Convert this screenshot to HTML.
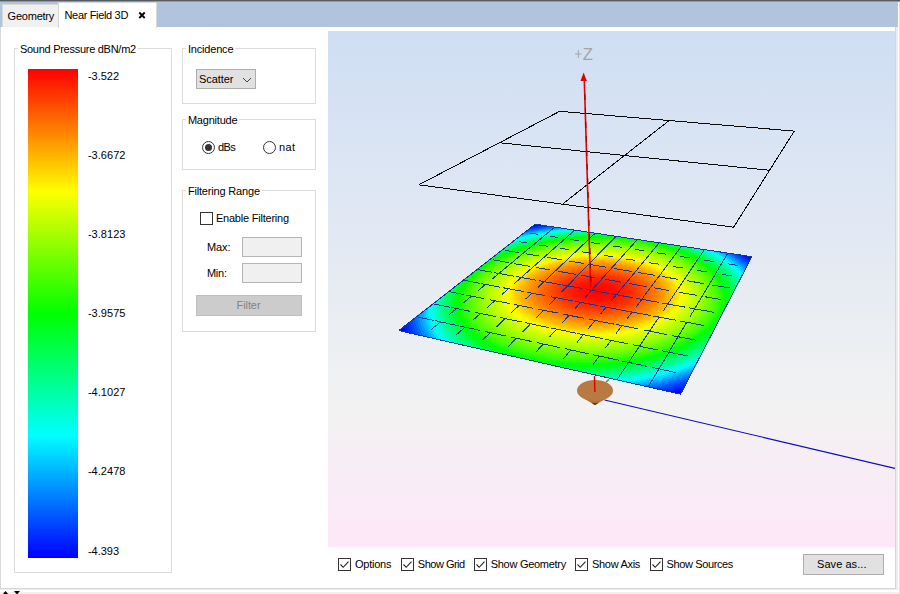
<!DOCTYPE html>
<html><head><meta charset="utf-8"><title>Near Field 3D</title>
<style>
html,body{margin:0;padding:0;}
body{width:900px;height:594px;position:relative;overflow:hidden;background:#fff;font-family:"Liberation Sans",sans-serif;}
.a{position:absolute;box-sizing:border-box;}
.t{position:absolute;white-space:nowrap;font-family:"Liberation Sans",sans-serif;}
.gb{position:absolute;box-sizing:border-box;border:1px solid #dcdcdc;}
.cb{position:absolute;box-sizing:border-box;width:13px;height:13px;border:1px solid #333;background:#fff;}
.cb svg{position:absolute;left:-1px;top:-1px;}
</style></head><body>
<!-- window frame -->
<div class="a" style="left:0;top:0;width:900px;height:594px;background:#f0f0f0"></div>
<div class="a" style="left:0;top:0;width:899px;height:592px;background:#fff"></div>
<div class="a" style="left:899px;top:0;width:1px;height:594px;background:#e2e2e2"></div>
<div class="a" style="left:0;top:27px;width:898px;height:563px;background:#ececec"></div>
<div class="a" style="left:0;top:27px;width:896px;height:562px;background:#fff;border-left:1px solid #d9d9d9;border-right:1px solid #d6d6d6;border-bottom:1px solid #d6d6d6"></div>
<!-- tab strip -->
<div class="a" style="left:0;top:0;width:898px;height:27px;background:#b0c4de"></div>
<div class="a" style="left:0;top:0;width:900px;height:1px;background:#5a5a5a"></div>
<div class="a" style="left:0;top:1px;width:900px;height:1px;background:#8d99aa"></div>
<div class="a" style="left:2px;top:4px;width:57px;height:23px;background:#f0f0f0;border:1px solid #d9d9d9;border-bottom:none"></div>
<div class="a" style="left:58px;top:2px;width:99px;height:26px;background:#fff;border:1px solid #d9d9d9;border-top-color:#c9d6e8;border-bottom:none"></div>
<svg class="a" style="left:137px;top:10px" width="10" height="10" viewBox="0 0 10 10"><path d="M2.3 2.5 L7.7 8 M7.7 2.5 L2.3 8" stroke="#000" stroke-width="1.8" fill="none"/></svg>
<!-- group boxes -->
<div class="gb" style="left:14px;top:48px;width:158px;height:525px"></div>
<div class="gb" style="left:182px;top:48px;width:134px;height:56px"></div>
<div class="gb" style="left:182px;top:119px;width:134px;height:51px"></div>
<div class="gb" style="left:182px;top:190px;width:134px;height:142px"></div>
<!-- colorbar -->
<div class="a" style="left:28px;top:69px;width:50px;height:489px;background:linear-gradient(to bottom,#ff0000 0%,#ffff00 25%,#00ff00 50%,#00ffff 75%,#0000ff 100%)"></div>
<!-- combo -->
<div class="a" style="left:196px;top:69px;width:60px;height:20px;background:#e1e1e1;border:1px solid #adadad"></div>
<svg class="a" style="left:241px;top:76px" width="12" height="8" viewBox="0 0 12 8"><path d="M2 2 L6 6 L10 2" stroke="#444" stroke-width="1" fill="none"/></svg>
<!-- radios -->
<div class="a" style="left:202px;top:141px;width:13px;height:13px;border:1px solid #333;border-radius:50%;background:#fff"></div>
<div class="a" style="left:205px;top:144px;width:7px;height:7px;border-radius:50%;background:#333"></div>
<div class="a" style="left:263px;top:141px;width:13px;height:13px;border:1px solid #333;border-radius:50%;background:#fff"></div>
<!-- filtering -->
<div class="cb" style="left:200px;top:212px"></div>
<div class="a" style="left:242px;top:237px;width:60px;height:20px;background:#f0f0f0;border:1px solid #b5b5b5"></div>
<div class="a" style="left:242px;top:263px;width:60px;height:20px;background:#f0f0f0;border:1px solid #b5b5b5"></div>
<div class="a" style="left:196px;top:295px;width:106px;height:21px;background:#cccccc;border:1px solid #bfbfbf"></div>
<!-- save button -->
<div class="a" style="left:803px;top:554px;width:81px;height:21px;background:#e1e1e1;border:1px solid #adadad"></div>
<!-- 3D viewport -->
<div class="a" style="left:328px;top:31px;width:567px;height:516px;overflow:hidden;background:linear-gradient(to bottom,#cfdef4 0%,#f2f2f2 73%,#fde7f8 100%)">
<svg class="a" style="left:0;top:0" width="567" height="516" viewBox="0 0 567 516">
<defs><clipPath id="q"><polygon points="207.2,193.2 423.8,225.7 352.6,363.2 70.8,299.6"/></clipPath></defs>
<path d="M231.7 80.3L466.3 100.1M466.3 100.1L405.6 196.2M405.6 196.2L90.8 153.8M90.8 153.8L231.7 80.3M340.3 90.2L235 172.7M172.8 111.9L440.7 139.2" stroke="#0a0a0a" stroke-width="1" fill="none" shape-rendering="crispEdges"/>
<g clip-path="url(#q)" shape-rendering="crispEdges">
<polygon points="207.2,193.2 423.8,225.7 352.6,363.2 70.8,299.6" fill="rgb(0,0,255)"/>
<polygon points="457.6,294.3 453.6,303.2 447.8,312.2 440.1,321 430.4,329.7 418.8,338 405.4,345.9 390.1,353.2 373.2,359.9 354.7,365.7 334.9,370.5 314.1,374.3 292.5,377.1 270.5,378.6 248.3,379 226.4,378.1 205,376.1 184.4,372.9 165,368.6 146.9,363.4 130.4,357.3 115.6,350.5 102.7,343 91.7,335 82.6,326.7 75.5,318 70.3,309.2 66.9,300.4 65.3,291.6 65.4,282.9 67,274.5 70.1,266.2 74.4,258.3 80.1,250.7 86.8,243.4 94.5,236.6 103,230.2 112.4,224.2 122.5,218.6 133.2,213.5 144.4,208.8 156.1,204.6 168.2,200.8 180.7,197.5 193.4,194.6 206.4,192.2 219.5,190.2 232.8,188.7 246.1,187.6 259.5,187 272.9,186.8 286.3,187 299.6,187.7 312.8,188.8 325.8,190.4 338.6,192.4 351.1,194.9 363.3,197.8 375.2,201.2 386.6,205.1 397.5,209.4 407.8,214.2 417.5,219.4 426.5,225.1 434.6,231.3 441.8,237.9 448,244.9 453.1,252.4 456.9,260.2 459.4,268.3 460.4,276.8 459.8,285.4" fill="rgb(0,0,255)"/>
<polygon points="455.2,293.9 451.2,302.7 445.4,311.5 437.8,320.2 428.2,328.8 416.7,337 403.4,344.7 388.3,351.9 371.6,358.4 353.4,364.1 333.9,368.9 313.4,372.7 292.1,375.3 270.4,376.9 248.6,377.2 226.9,376.4 205.8,374.4 185.6,371.2 166.4,367.1 148.5,361.9 132.2,356 117.6,349.2 104.8,341.9 93.9,334 85,325.8 77.9,317.3 72.7,308.6 69.3,299.9 67.7,291.2 67.7,282.7 69.3,274.3 72.2,266.1 76.5,258.3 82,250.8 88.6,243.6 96.2,236.8 104.7,230.5 113.9,224.5 123.9,219 134.5,213.9 145.6,209.3 157.1,205.1 169.1,201.4 181.4,198.1 194,195.2 206.9,192.8 219.9,190.9 233,189.3 246.3,188.3 259.6,187.6 272.9,187.4 286.1,187.6 299.3,188.3 312.3,189.4 325.2,191 337.9,193 350.3,195.5 362.4,198.4 374.1,201.7 385.4,205.6 396.2,209.9 406.4,214.6 416,219.8 424.8,225.5 432.8,231.6 439.9,238.1 446,245.1 451,252.4 454.7,260.2 457.1,268.2 458.1,276.6 457.5,285.1" fill="rgb(0,2,255)"/>
<polygon points="452.9,293.4 448.9,302.1 443.1,310.8 435.5,319.4 426,327.8 414.6,335.9 401.5,343.5 386.6,350.6 370.1,357 352.1,362.6 332.9,367.3 312.7,371 291.7,373.6 270.3,375.1 248.8,375.5 227.5,374.6 206.7,372.7 186.7,369.6 167.8,365.5 150.2,360.5 134.1,354.6 119.7,348 107,340.7 96.2,333 87.3,324.9 80.3,316.5 75.1,308 71.7,299.4 70.1,290.8 70,282.4 71.5,274.1 74.4,266.1 78.6,258.3 84,250.9 90.5,243.8 98,237.1 106.3,230.8 115.4,224.9 125.3,219.4 135.7,214.4 146.7,209.8 158.2,205.6 170,201.9 182.2,198.7 194.7,195.8 207.4,193.4 220.3,191.5 233.3,190 246.4,188.9 259.6,188.3 272.8,188.1 285.9,188.3 299,189 311.9,190.1 324.7,191.6 337.2,193.6 349.5,196.1 361.5,199 373.1,202.3 384.2,206.1 394.9,210.4 405,215.1 414.4,220.2 423.2,225.8 431.1,231.9 438.1,238.4 444,245.2 448.9,252.5 452.6,260.2 454.9,268.1 455.8,276.4 455.1,284.8" fill="rgb(0,6,255)"/>
<polygon points="450.5,293 446.5,301.6 440.8,310.2 433.2,318.6 423.8,326.9 412.6,334.8 399.6,342.4 384.8,349.3 368.5,355.6 350.8,361.1 331.9,365.7 311.9,369.3 291.3,371.9 270.2,373.4 249,373.7 228,372.9 207.5,371 187.8,368 169.2,364 151.8,359 135.9,353.2 121.7,346.7 109.2,339.6 98.5,332 89.7,324 82.7,315.8 77.5,307.4 74.1,298.9 72.4,290.5 72.3,282.1 73.8,273.9 76.6,266 80.7,258.3 86,251 92.4,243.9 99.7,237.3 107.9,231.1 117,225.2 126.7,219.8 137,214.8 147.9,210.3 159.2,206.2 170.9,202.5 183,199.2 195.3,196.4 207.9,194.1 220.7,192.1 233.6,190.6 246.6,189.5 259.6,188.9 272.7,188.7 285.7,188.9 298.6,189.6 311.4,190.7 324.1,192.2 336.5,194.2 348.7,196.7 360.5,199.5 372,202.8 383,206.6 393.6,210.8 403.6,215.5 412.9,220.6 421.5,226.2 429.3,232.2 436.2,238.6 442,245.4 446.8,252.6 450.4,260.1 452.6,268 453.5,276.2 452.8,284.5" fill="rgb(0,9,255)"/>
<polygon points="448.1,292.6 444.2,301 438.4,309.5 430.9,317.8 421.6,326 410.5,333.8 397.6,341.2 383.1,348 367,354.2 349.5,359.6 330.9,364.1 311.2,367.7 290.9,370.2 270.1,371.7 249.2,372 228.6,371.2 208.4,369.3 189,366.4 170.6,362.4 153.4,357.6 137.8,351.9 123.7,345.5 111.3,338.5 100.8,331 92,323.2 85.1,315 79.9,306.8 76.5,298.4 74.8,290.1 74.7,281.8 76,273.8 78.8,265.9 82.8,258.3 88,251 94.2,244.1 101.5,237.5 109.6,231.4 118.5,225.6 128.1,220.2 138.3,215.3 149,210.8 160.2,206.7 171.8,203 183.8,199.8 196,197 208.5,194.7 221.1,192.7 233.9,191.3 246.8,190.2 259.7,189.6 272.6,189.4 285.5,189.6 298.3,190.3 311,191.3 323.5,192.9 335.8,194.8 347.9,197.3 359.6,200.1 370.9,203.4 381.9,207.1 392.3,211.3 402.1,216 411.3,221 419.8,226.5 427.5,232.5 434.3,238.8 440.1,245.6 444.7,252.7 448.2,260.1 450.4,267.9 451.2,275.9 450.5,284.2" fill="rgb(0,22,255)"/>
<polygon points="445.8,292.2 441.8,300.5 436.1,308.8 428.7,317 419.4,325.1 408.4,332.7 395.7,340 381.4,346.7 365.5,352.8 348.3,358.1 329.8,362.6 310.5,366.1 290.5,368.6 270,370 249.5,370.3 229.1,369.5 209.2,367.7 190.1,364.8 171.9,360.9 155.1,356.1 139.6,350.5 125.7,344.3 113.5,337.4 103,330 94.3,322.3 87.4,314.3 82.3,306.1 78.9,297.9 77.2,289.7 77,281.6 78.3,273.6 80.9,265.8 84.9,258.3 90,251.1 96.1,244.3 103.2,237.8 111.2,231.7 120,225.9 129.5,220.6 139.5,215.7 150.2,211.2 161.2,207.2 172.7,203.6 184.5,200.4 196.6,197.6 209,195.3 221.5,193.4 234.2,191.9 246.9,190.8 259.7,190.2 272.5,190 285.3,190.2 298,190.9 310.5,192 322.9,193.5 335.1,195.5 347,197.9 358.7,200.7 369.9,204 380.7,207.7 391,211.8 400.7,216.4 409.8,221.4 418.2,226.9 425.7,232.8 432.4,239 438.1,245.7 442.7,252.8 446.1,260.1 448.2,267.8 448.9,275.7 448.1,283.9" fill="rgb(0,39,255)"/>
<polygon points="443.4,291.7 439.5,300 433.8,308.2 426.4,316.3 417.3,324.1 406.4,331.7 393.8,338.9 379.7,345.5 364,351.4 347,356.6 328.9,361 309.8,364.5 290,366.9 269.9,368.3 249.7,368.6 229.6,367.8 210,366 191.2,363.2 173.3,359.4 156.7,354.7 141.4,349.2 127.7,343 115.6,336.3 105.2,329 96.6,321.4 89.8,313.6 84.7,305.5 81.3,297.4 79.5,289.3 79.3,281.3 80.5,273.4 83.1,265.8 86.9,258.3 91.9,251.2 98,244.4 105,238 112.9,232 121.5,226.3 130.9,221 140.8,216.2 151.3,211.7 162.3,207.7 173.6,204.1 185.3,201 197.3,198.2 209.5,195.9 221.9,194 234.4,192.5 247.1,191.5 259.8,190.9 272.4,190.7 285.1,190.9 297.7,191.6 310.1,192.6 322.4,194.2 334.4,196.1 346.2,198.5 357.7,201.3 368.8,204.5 379.5,208.2 389.7,212.3 399.3,216.8 408.2,221.8 416.5,227.2 423.9,233 430.5,239.3 436.1,245.9 440.6,252.8 443.9,260.1 445.9,267.7 446.6,275.5 445.8,283.6" fill="rgb(0,55,255)"/>
<polygon points="441.1,291.3 437.1,299.4 431.5,307.5 424.2,315.5 415.1,323.2 404.3,330.7 391.9,337.7 377.9,344.2 362.5,350.1 345.7,355.2 327.9,359.5 309.1,362.8 289.6,365.2 269.8,366.6 249.9,366.9 230.1,366.2 210.8,364.4 192.3,361.6 174.7,357.9 158.3,353.3 143.2,347.9 129.6,341.8 117.7,335.2 107.5,328.1 98.9,320.6 92.2,312.8 87.1,304.9 83.7,296.9 81.9,288.9 81.6,281 82.8,273.2 85.3,265.7 89,258.4 93.9,251.3 99.9,244.6 106.8,238.3 114.5,232.3 123.1,226.6 132.3,221.4 142.1,216.6 152.5,212.2 163.3,208.2 174.5,204.7 186.1,201.5 198,198.8 210,196.5 222.3,194.7 234.7,193.2 247.2,192.2 259.8,191.5 272.4,191.3 284.9,191.6 297.3,192.2 309.6,193.3 321.8,194.8 333.7,196.7 345.4,199.1 356.8,201.9 367.7,205.1 378.3,208.7 388.3,212.8 397.8,217.3 406.7,222.2 414.8,227.6 422.2,233.3 428.6,239.5 434.1,246 438.5,252.9 441.7,260.1 443.7,267.6 444.3,275.3 443.5,283.3" fill="rgb(0,71,255)"/>
<polygon points="438.8,290.9 434.8,298.9 429.2,306.8 421.9,314.7 412.9,322.3 402.3,329.6 390.1,336.5 376.3,342.9 361,348.7 344.5,353.7 326.9,357.9 308.4,361.2 289.2,363.6 269.7,364.9 250.1,365.2 230.7,364.5 211.7,362.8 193.4,360 176,356.4 159.8,351.9 145,346.6 131.6,340.6 119.8,334.1 109.7,327.1 101.2,319.7 94.5,312.1 89.5,304.3 86.1,296.4 84.2,288.5 83.9,280.7 85,273.1 87.4,265.6 91.1,258.4 95.9,251.4 101.8,244.8 108.5,238.5 116.2,232.6 124.6,227 133.7,221.8 143.4,217.1 153.6,212.7 164.3,208.8 175.4,205.2 186.9,202.1 198.6,199.4 210.6,197.2 222.7,195.3 235,193.8 247.4,192.8 259.8,192.2 272.3,192 284.7,192.2 297,192.9 309.2,193.9 321.2,195.4 333,197.3 344.6,199.7 355.8,202.4 366.7,205.6 377.1,209.2 387,213.3 396.4,217.7 405.1,222.6 413.1,227.9 420.4,233.6 426.7,239.7 432.1,246.2 436.4,253 439.6,260.1 441.5,267.5 442,275.1 441.1,282.9" fill="rgb(0,88,255)"/>
<polygon points="436.4,290.5 432.5,298.3 426.9,306.2 419.7,313.9 410.8,321.4 400.3,328.6 388.2,335.4 374.6,341.7 359.5,347.3 343.3,352.3 325.9,356.4 307.7,359.7 288.8,362 269.6,363.3 250.3,363.6 231.2,362.9 212.5,361.2 194.5,358.5 177.4,354.9 161.4,350.5 146.8,345.3 133.6,339.4 121.9,333 111.9,326.1 103.5,318.9 96.9,311.4 91.8,303.7 88.4,295.9 86.6,288.1 86.2,280.5 87.3,272.9 89.6,265.5 93.2,258.4 97.9,251.5 103.6,245 110.3,238.7 117.9,232.9 126.1,227.4 135.1,222.2 144.7,217.5 154.8,213.2 165.4,209.3 176.4,205.8 187.7,202.7 199.3,200 211.1,197.8 223.1,195.9 235.3,194.5 247.6,193.5 259.9,192.9 272.2,192.7 284.5,192.9 296.7,193.5 308.7,194.6 320.6,196.1 332.3,198 343.7,200.3 354.9,203 365.6,206.2 375.9,209.8 385.7,213.8 394.9,218.2 403.6,223 411.5,228.3 418.6,233.9 424.8,239.9 430.1,246.3 434.3,253.1 437.4,260.1 439.2,267.4 439.7,274.9 438.8,282.6" fill="rgb(0,109,255)"/>
<polygon points="434.1,290 430.2,297.8 424.6,305.5 417.5,313.1 408.7,320.5 398.3,327.6 386.3,334.3 372.9,340.4 358.1,346 342,350.8 324.9,354.9 307,358.1 288.4,360.3 269.5,361.6 250.5,361.9 231.7,361.2 213.3,359.6 195.5,356.9 178.7,353.4 163,349.1 148.5,344 135.5,338.2 124,331.9 114.1,325.1 105.8,318 99.2,310.6 94.2,303.1 90.8,295.4 88.9,287.8 88.5,280.2 89.5,272.7 91.8,265.4 95.3,258.4 99.9,251.6 105.5,245.1 112.1,239 119.5,233.2 127.7,227.7 136.5,222.7 146,218 156,213.7 166.4,209.8 177.3,206.4 188.5,203.3 199.9,200.7 211.7,198.4 223.6,196.6 235.6,195.2 247.7,194.1 259.9,193.5 272.1,193.4 284.2,193.6 296.3,194.2 308.3,195.3 320,196.7 331.6,198.6 342.9,200.9 353.9,203.6 364.5,206.8 374.7,210.3 384.4,214.3 393.5,218.7 402,223.4 409.8,228.6 416.8,234.2 422.9,240.2 428.1,246.5 432.2,253.1 435.2,260.1 437,267.3 437.5,274.7 436.5,282.3" fill="rgb(0,132,255)"/>
<polygon points="431.8,289.6 427.8,297.3 422.3,304.9 415.2,312.3 406.6,319.6 396.3,326.6 384.5,333.1 371.2,339.2 356.6,344.6 340.8,349.4 324,353.4 306.3,356.5 288,358.7 269.4,360 250.7,360.3 232.2,359.6 214.1,358 196.6,355.4 180,351.9 164.5,347.7 150.3,342.7 137.4,337 126.1,330.8 116.3,324.2 108.1,317.2 101.5,309.9 96.5,302.5 93.1,294.9 91.2,287.4 90.8,279.9 91.7,272.5 94,265.4 97.4,258.4 101.9,251.7 107.4,245.3 113.9,239.2 121.2,233.5 129.2,228.1 138,223.1 147.3,218.4 157.2,214.2 167.5,210.4 178.2,206.9 189.3,203.9 200.6,201.3 212.2,199 224,197.2 235.9,195.8 247.9,194.8 259.9,194.2 272,194 284,194.3 296,194.9 307.8,195.9 319.5,197.4 330.9,199.2 342.1,201.5 352.9,204.2 363.4,207.3 373.5,210.8 383,214.8 392,219.1 400.4,223.9 408.1,229 415,234.5 421,240.4 426.1,246.6 430.1,253.2 433.1,260.1 434.8,267.2 435.2,274.5 434.2,282" fill="rgb(0,155,255)"/>
<polygon points="429.5,289.2 425.5,296.7 420.1,304.2 413,311.6 404.4,318.7 394.3,325.6 382.6,332 369.6,338 355.2,343.3 339.6,348 323,351.9 305.6,355 287.7,357.1 269.3,358.4 250.9,358.7 232.7,358 214.9,356.4 197.7,353.9 181.4,350.5 166.1,346.3 152,341.4 139.4,335.8 128.1,329.7 118.5,323.2 110.4,316.3 103.8,309.2 98.9,301.8 95.5,294.4 93.6,287 93.1,279.6 94,272.4 96.1,265.3 99.5,258.4 103.9,251.8 109.3,245.5 115.7,239.4 122.8,233.8 130.8,228.4 139.4,223.5 148.6,218.9 158.3,214.7 168.5,210.9 179.1,207.5 190.1,204.5 201.3,201.9 212.7,199.7 224.4,197.9 236.2,196.5 248.1,195.5 260,194.9 271.9,194.7 283.8,194.9 295.6,195.6 307.3,196.6 318.9,198 330.2,199.9 341.2,202.1 352,204.8 362.3,207.9 372.3,211.4 381.7,215.3 390.6,219.6 398.8,224.3 406.4,229.3 413.2,234.8 419.1,240.6 424.1,246.8 428.1,253.3 430.9,260.1 432.5,267.1 432.9,274.3 431.9,281.7" fill="rgb(0,177,255)"/>
<polygon points="427.2,288.8 423.2,296.2 417.8,303.6 410.8,310.8 402.3,317.8 392.3,324.6 380.8,330.9 367.9,336.7 353.7,342 338.4,346.6 322.1,350.4 304.9,353.4 287.3,355.6 269.3,356.8 251.2,357.1 233.2,356.4 215.7,354.8 198.7,352.3 182.7,349 167.6,344.9 153.8,340.1 141.3,334.7 130.2,328.7 120.6,322.3 112.6,315.5 106.1,308.4 101.2,301.2 97.8,293.9 95.9,286.6 95.4,279.4 96.2,272.2 98.3,265.2 101.5,258.4 105.9,251.9 111.2,245.6 117.4,239.7 124.5,234.1 132.3,228.8 140.8,223.9 149.9,219.4 159.5,215.2 169.6,211.4 180.1,208.1 190.9,205.1 202,202.5 213.3,200.3 224.8,198.5 236.5,197.2 248.2,196.2 260,195.6 271.8,195.4 283.6,195.6 295.3,196.2 306.9,197.3 318.3,198.7 329.5,200.5 340.4,202.8 351,205.4 361.2,208.5 371,211.9 380.4,215.8 389.1,220 397.3,224.7 404.7,229.7 411.4,235.1 417.2,240.9 422.1,246.9 426,253.4 428.7,260 430.3,267 430.6,274.1 429.6,281.4" fill="rgb(0,200,255)"/>
<polygon points="424.8,288.4 420.9,295.7 415.6,302.9 408.7,310 400.2,316.9 390.3,323.6 379,329.8 366.3,335.5 352.3,340.7 337.2,345.2 321.1,348.9 304.3,351.9 286.9,354 269.2,355.2 251.4,355.5 233.7,354.8 216.4,353.3 199.8,350.8 184,347.6 169.2,343.5 155.5,338.8 143.2,333.5 132.3,327.6 122.8,321.3 114.9,314.6 108.4,307.7 103.6,300.6 100.2,293.5 98.2,286.2 97.7,279.1 98.4,272 100.5,265.1 103.6,258.4 107.9,252 113.1,245.8 119.2,239.9 126.2,234.4 133.9,229.2 142.3,224.3 151.2,219.8 160.7,215.7 170.6,212 181,208.6 191.7,205.7 202.6,203.1 213.8,201 225.2,199.2 236.8,197.8 248.4,196.8 260.1,196.3 271.7,196.1 283.4,196.3 295,196.9 306.4,197.9 317.7,199.4 328.7,201.2 339.5,203.4 350,206 360.1,209 369.8,212.4 379,216.3 387.7,220.5 395.7,225.1 403,230.1 409.6,235.4 415.3,241.1 420.1,247.1 423.9,253.4 426.6,260 428.1,266.9 428.4,273.9 427.3,281.1" fill="rgb(0,223,255)"/>
<polygon points="422.5,288 418.7,295.1 413.3,302.3 406.5,309.3 398.2,316.1 388.4,322.6 377.2,328.7 364.6,334.3 350.9,339.4 336,343.8 320.2,347.5 303.6,350.4 286.5,352.4 269.1,353.6 251.6,353.9 234.2,353.2 217.2,351.7 200.8,349.3 185.3,346.1 170.7,342.2 157.2,337.6 145.1,332.3 134.3,326.5 124.9,320.4 117.1,313.8 110.7,307 105.9,300 102.5,293 100.6,285.9 100,278.8 100.7,271.9 102.6,265 105.7,258.4 109.9,252.1 115,246 121,240.2 127.9,234.7 135.5,229.5 143.7,224.7 152.5,220.3 161.9,216.2 171.7,212.5 181.9,209.2 192.5,206.3 203.3,203.8 214.4,201.6 225.7,199.9 237.1,198.5 248.6,197.5 260.1,197 271.7,196.8 283.2,197 294.6,197.6 305.9,198.6 317.1,200 328,201.8 338.7,204 349,206.6 359,209.6 368.6,213 377.7,216.8 386.2,220.9 394.1,225.5 401.3,230.4 407.8,235.7 413.4,241.3 418.1,247.3 421.8,253.5 424.4,260 425.9,266.8 426.1,273.7 425,280.8" fill="rgb(0,246,255)"/>
<polygon points="420.2,287.5 416.4,294.6 411.1,301.6 404.3,308.5 396.1,315.2 386.4,321.6 375.4,327.6 363,333.1 349.4,338.1 334.8,342.4 319.2,346 302.9,348.8 286.1,350.9 269,352 251.8,352.3 234.7,351.7 218,350.2 201.9,347.8 186.5,344.7 172.2,340.8 158.9,336.3 147,331.2 136.3,325.5 127.1,319.4 119.3,313 113,306.3 108.2,299.4 104.8,292.5 102.9,285.5 102.3,278.5 102.9,271.7 104.8,265 107.8,258.4 111.9,252.2 116.9,246.1 122.8,240.4 129.5,235 137,229.9 145.1,225.1 153.8,220.7 163.1,216.7 172.8,213.1 182.9,209.8 193.3,206.9 204,204.4 214.9,202.3 226.1,200.5 237.4,199.2 248.7,198.2 260.1,197.6 271.6,197.5 283,197.7 294.3,198.3 305.5,199.3 316.5,200.7 327.3,202.5 337.8,204.6 348.1,207.2 357.9,210.2 367.4,213.5 376.3,217.3 384.7,221.4 392.5,225.9 399.6,230.8 406,236 411.5,241.5 416.1,247.4 419.7,253.6 422.2,260 423.6,266.7 423.8,273.5 422.7,280.5" fill="rgb(0,255,241)"/>
<polygon points="418,287.1 414.1,294.1 408.8,301 402.1,307.8 394,314.3 384.5,320.6 373.6,326.5 361.4,331.9 348,336.8 333.6,341 318.3,344.6 302.3,347.3 285.7,349.3 268.9,350.4 252,350.7 235.2,350.1 218.8,348.7 202.9,346.4 187.8,343.3 173.7,339.5 160.7,335 148.8,330 138.3,324.4 129.2,318.5 121.5,312.2 115.3,305.6 110.5,298.8 107.2,292 105.2,285.1 104.5,278.3 105.1,271.5 107,264.9 109.9,258.5 113.9,252.3 118.8,246.3 124.6,240.6 131.2,235.3 138.6,230.2 146.6,225.5 155.2,221.2 164.3,217.2 173.8,213.6 183.8,210.4 194.1,207.5 204.7,205 215.5,202.9 226.5,201.2 237.7,199.9 248.9,198.9 260.2,198.3 271.5,198.2 282.7,198.4 293.9,199 305,200 315.9,201.3 326.6,203.1 337,205.3 347.1,207.8 356.8,210.8 366.1,214.1 375,217.8 383.2,221.9 390.9,226.3 397.9,231.1 404.1,236.3 409.6,241.8 414.1,247.6 417.6,253.7 420.1,260 421.4,266.6 421.6,273.3 420.4,280.2" fill="rgb(0,255,218)"/>
<polygon points="415.7,286.7 411.8,293.6 406.6,300.3 400,307 392,313.4 382.5,319.6 371.8,325.4 359.8,330.7 346.6,335.5 332.4,339.6 317.4,343.1 301.6,345.8 285.4,347.8 268.8,348.9 252.2,349.2 235.7,348.6 219.5,347.1 203.9,344.9 189.1,341.9 175.2,338.2 162.3,333.8 150.7,328.8 140.3,323.4 131.3,317.5 123.8,311.3 117.6,304.9 112.8,298.2 109.5,291.5 107.5,284.7 106.8,278 107.4,271.3 109.1,264.8 112,258.5 115.9,252.3 120.7,246.5 126.4,240.9 132.9,235.6 140.2,230.6 148,226 156.5,221.7 165.5,217.7 174.9,214.1 184.7,210.9 194.9,208.1 205.4,205.6 216.1,203.6 226.9,201.9 238,200.5 249.1,199.6 260.2,199 271.4,198.9 282.5,199.1 293.6,199.7 304.5,200.6 315.3,202 325.8,203.8 336.1,205.9 346.1,208.4 355.7,211.3 364.9,214.6 373.6,218.3 381.8,222.3 389.3,226.7 396.2,231.5 402.3,236.6 407.6,242 412.1,247.7 415.5,253.7 417.9,260 419.2,266.5 419.3,273.1 418.1,279.9" fill="rgb(0,255,195)"/>
<polygon points="413.4,286.3 409.6,293 404.4,299.7 397.8,306.2 389.9,312.6 380.6,318.6 370,324.3 358.2,329.5 345.2,334.2 331.3,338.3 316.5,341.7 301,344.4 285,346.3 268.7,347.3 252.4,347.6 236.1,347 220.3,345.6 204.9,343.4 190.4,340.5 176.7,336.8 164,332.6 152.6,327.7 142.3,322.4 133.5,316.6 126,310.5 119.9,304.2 115.1,297.6 111.8,291 109.8,284.4 109.1,277.7 109.6,271.2 111.3,264.7 114.1,258.5 117.9,252.4 122.6,246.6 128.2,241.1 134.6,235.9 141.7,231 149.5,226.4 157.8,222.1 166.7,218.2 176,214.7 185.7,211.5 195.7,208.7 206.1,206.3 216.6,204.2 227.4,202.5 238.3,201.2 249.2,200.3 260.3,199.7 271.3,199.6 282.3,199.8 293.2,200.4 304,201.3 314.7,202.7 325.1,204.4 335.3,206.5 345.1,209 354.6,211.9 363.6,215.2 372.2,218.8 380.3,222.8 387.7,227.1 394.5,231.8 400.5,236.9 405.7,242.2 410.1,247.9 413.4,253.8 415.8,260 417,266.4 417.1,272.9 415.9,279.6" fill="rgb(0,255,173)"/>
<polygon points="411.1,285.9 407.3,292.5 402.2,299.1 395.7,305.5 387.9,311.7 378.7,317.6 368.3,323.2 356.6,328.3 343.9,332.9 330.1,336.9 315.6,340.3 300.3,342.9 284.6,344.7 268.6,345.8 252.6,346.1 236.6,345.5 221,344.1 206,342 191.6,339.1 178.1,335.5 165.7,331.3 154.4,326.6 144.3,321.3 135.6,315.7 128.2,309.7 122.1,303.5 117.4,297 114.1,290.5 112.1,284 111.4,277.4 111.8,271 113.5,264.7 116.2,258.5 119.9,252.5 124.5,246.8 130,241.4 136.3,236.2 143.3,231.3 150.9,226.8 159.2,222.6 167.9,218.7 177.1,215.2 186.7,212.1 196.6,209.3 206.8,206.9 217.2,204.9 227.8,203.2 238.6,201.9 249.4,201 260.3,200.4 271.2,200.3 282.1,200.5 292.9,201.1 303.6,202 314.1,203.4 324.4,205.1 334.4,207.2 344.1,209.7 353.5,212.5 362.4,215.7 370.9,219.3 378.8,223.3 386.1,227.6 392.8,232.2 398.7,237.2 403.8,242.5 408,248 411.3,253.9 413.6,260 414.8,266.3 414.8,272.7 413.6,279.3" fill="rgb(0,255,150)"/>
<polygon points="408.8,285.5 405.1,292 400,298.4 393.6,304.7 385.8,310.9 376.8,316.7 366.5,322.1 355,327.2 342.5,331.7 329,335.6 314.7,338.9 299.7,341.4 284.3,343.2 268.5,344.3 252.8,344.5 237.1,344 221.8,342.6 207,340.5 192.9,337.7 179.6,334.2 167.4,330.1 156.2,325.4 146.3,320.3 137.7,314.7 130.3,308.9 124.4,302.8 119.7,296.5 116.4,290.1 114.4,283.6 113.6,277.2 114.1,270.8 115.6,264.6 118.2,258.5 121.9,252.6 126.4,247 131.8,241.6 138,236.5 144.9,231.7 152.4,227.2 160.5,223.1 169.1,219.3 178.2,215.8 187.6,212.7 197.4,209.9 207.5,207.6 217.7,205.5 228.2,203.9 238.9,202.6 249.6,201.7 260.3,201.1 271.1,201 281.9,201.2 292.5,201.8 303.1,202.7 313.4,204 323.6,205.7 333.5,207.8 343.1,210.3 352.3,213.1 361.1,216.3 369.5,219.8 377.3,223.7 384.5,228 391,232.6 396.9,237.5 401.9,242.7 406,248.2 409.2,254 411.4,260 412.6,266.2 412.5,272.5 411.3,279" fill="rgb(0,255,128)"/>
<polygon points="406.6,285.1 402.8,291.5 397.8,297.8 391.5,304 383.8,310 374.9,315.7 364.7,321.1 353.5,326 341.1,330.4 327.8,334.2 313.8,337.4 299.1,340 283.9,341.7 268.5,342.8 252.9,343 237.6,342.5 222.5,341.2 208,339.1 194.1,336.3 181.1,332.9 169,328.9 158.1,324.3 148.3,319.3 139.8,313.8 132.5,308.1 126.6,302.1 122,295.9 118.7,289.6 116.7,283.2 115.9,276.9 116.3,270.6 117.8,264.5 120.3,258.5 123.9,252.7 128.3,247.2 133.6,241.8 139.7,236.8 146.5,232.1 153.9,227.6 161.8,223.5 170.3,219.8 179.3,216.3 188.6,213.3 198.2,210.6 208.2,208.2 218.3,206.2 228.7,204.6 239.2,203.3 249.7,202.4 260.4,201.9 271,201.7 281.6,201.9 292.2,202.5 302.6,203.4 312.8,204.7 322.9,206.4 332.6,208.5 342.1,210.9 351.2,213.7 359.9,216.8 368.1,220.3 375.8,224.2 382.9,228.4 389.3,232.9 395,237.8 400,242.9 404,248.3 407.2,254 409.3,259.9 410.4,266 410.3,272.3 409.1,278.7" fill="rgb(0,255,108)"/>
<polygon points="404.3,284.7 400.6,291 395.6,297.2 389.3,303.3 381.8,309.1 373,314.7 363,320 351.9,324.8 339.8,329.2 326.7,332.9 312.9,336.1 298.4,338.5 283.5,340.3 268.4,341.3 253.1,341.5 238,341 223.2,339.7 209,337.7 195.3,335 182.5,331.6 170.7,327.7 159.9,323.2 150.2,318.2 141.8,312.9 134.7,307.3 128.8,301.4 124.3,295.3 121,289.1 119,282.9 118.2,276.6 118.5,270.5 119.9,264.4 122.4,258.5 125.9,252.8 130.3,247.3 135.4,242.1 141.4,237.1 148.1,232.4 155.3,228.1 163.2,224 171.6,220.3 180.3,216.9 189.5,213.9 199.1,211.2 208.9,208.8 218.9,206.9 229.1,205.2 239.5,204 249.9,203.1 260.4,202.6 270.9,202.4 281.4,202.6 291.8,203.2 302.1,204.1 312.2,205.4 322.1,207.1 331.8,209.1 341.1,211.5 350.1,214.3 358.6,217.4 366.7,220.8 374.3,224.7 381.3,228.8 387.6,233.3 393.2,238.1 398,243.1 402,248.5 405.1,254.1 407.1,259.9 408.1,265.9 408.1,272.1 406.8,278.4" fill="rgb(0,255,89)"/>
<polygon points="402.1,284.2 398.4,290.4 393.4,296.5 387.2,302.5 379.8,308.3 371.1,313.8 361.3,318.9 350.3,323.7 338.4,327.9 325.6,331.6 312,334.7 297.8,337.1 283.2,338.8 268.3,339.8 253.3,340 238.5,339.5 224,338.2 209.9,336.3 196.6,333.6 184,330.3 172.3,326.5 161.7,322.1 152.2,317.2 143.9,312 136.9,306.4 131.1,300.7 126.6,294.7 123.3,288.6 121.3,282.5 120.4,276.4 120.7,270.3 122.1,264.3 124.5,258.5 127.9,252.9 132.2,247.5 137.3,242.3 143.1,237.4 149.7,232.8 156.8,228.5 164.5,224.5 172.8,220.8 181.4,217.5 190.5,214.5 199.9,211.8 209.6,209.5 219.5,207.5 229.5,205.9 239.8,204.7 250.1,203.8 260.5,203.3 270.8,203.1 281.2,203.3 291.5,203.9 301.6,204.8 311.6,206.1 321.4,207.8 330.9,209.8 340.1,212.1 348.9,214.9 357.4,217.9 365.3,221.4 372.8,225.1 379.6,229.2 385.9,233.6 391.4,238.4 396.1,243.4 400,248.7 403,254.2 405,259.9 405.9,265.8 405.8,271.9 404.5,278.1" fill="rgb(0,255,69)"/>
<polygon points="399.8,283.8 396.2,289.9 391.3,295.9 385.1,301.8 377.8,307.5 369.2,312.8 359.6,317.9 348.8,322.5 337.1,326.7 324.4,330.3 311.1,333.3 297.2,335.7 282.8,337.3 268.2,338.3 253.5,338.5 239,338 224.7,336.8 210.9,334.9 197.8,332.3 185.4,329.1 173.9,325.3 163.5,321 154.1,316.2 146,311.1 139,305.6 133.3,300 128.8,294.1 125.6,288.1 123.5,282.1 122.7,276.1 122.9,270.1 124.3,264.3 126.6,258.5 129.9,253 134.1,247.7 139.1,242.6 144.8,237.7 151.3,233.2 158.3,228.9 165.9,225 174,221.3 182.5,218 191.5,215.1 200.7,212.4 210.3,210.1 220,208.2 230,206.6 240.1,205.4 250.3,204.5 260.5,204 270.8,203.8 281,204 291.1,204.6 301.1,205.5 311,206.8 320.6,208.4 330,210.4 339.1,212.8 347.8,215.5 356.1,218.5 363.9,221.9 371.3,225.6 378,229.6 384.1,234 389.5,238.7 394.2,243.6 398,248.8 400.9,254.3 402.8,259.9 403.7,265.7 403.6,271.7 402.3,277.8" fill="rgb(0,255,49)"/>
<polygon points="397.6,283.4 393.9,289.4 389.1,295.3 383,301.1 375.8,306.6 367.4,311.9 357.8,316.8 347.3,321.4 335.7,325.4 323.3,329 310.2,331.9 296.5,334.2 282.4,335.9 268.1,336.8 253.7,337 239.4,336.6 225.4,335.4 211.9,333.5 199,330.9 186.8,327.8 175.6,324.1 165.3,319.9 156.1,315.2 148,310.2 141.2,304.8 135.5,299.3 131.1,293.5 127.8,287.7 125.8,281.7 124.9,275.8 125.2,270 126.4,264.2 128.7,258.6 131.9,253.1 136,247.8 140.9,242.8 146.5,238 152.9,233.5 159.8,229.3 167.3,225.4 175.2,221.8 183.7,218.6 192.4,215.6 201.6,213.1 211,210.8 220.6,208.9 230.4,207.3 240.4,206.1 250.4,205.2 260.5,204.7 270.7,204.6 280.7,204.8 290.7,205.3 300.6,206.2 310.3,207.5 319.8,209.1 329.1,211.1 338,213.4 346.6,216 354.8,219.1 362.6,222.4 369.8,226.1 376.4,230.1 382.4,234.4 387.7,239 392.2,243.8 396,249 398.8,254.3 400.7,259.9 401.5,265.6 401.3,271.5 400,277.4" fill="rgb(0,255,30)"/>
<polygon points="395.3,283 391.7,288.9 386.9,294.7 381,300.3 373.8,305.8 365.5,311 356.1,315.8 345.7,320.2 334.4,324.2 322.2,327.7 309.4,330.6 295.9,332.8 282.1,334.4 268,335.4 253.9,335.6 239.9,335.1 226.2,333.9 212.9,332.1 200.2,329.6 188.2,326.5 177.2,322.9 167.1,318.8 158,314.2 150.1,309.3 143.3,304.1 137.7,298.6 133.3,292.9 130.1,287.2 128.1,281.4 127.2,275.6 127.4,269.8 128.6,264.1 130.8,258.6 133.9,253.2 137.9,248 142.7,243.1 148.3,238.4 154.5,233.9 161.3,229.8 168.6,225.9 176.5,222.4 184.8,219.1 193.4,216.2 202.4,213.7 211.7,211.5 221.2,209.6 230.9,208 240.7,206.8 250.6,206 260.6,205.5 270.6,205.3 280.5,205.5 290.4,206 300.1,206.9 309.7,208.2 319.1,209.8 328.2,211.7 337,214 345.5,216.6 353.6,219.6 361.2,222.9 368.2,226.5 374.8,230.5 380.7,234.7 385.9,239.3 390.3,244.1 393.9,249.1 396.7,254.4 398.5,259.9 399.3,265.5 399.1,271.3 397.8,277.1" fill="rgb(0,255,10)"/>
<polygon points="393.2,282.6 389.6,288.4 384.9,294.1 379,299.6 371.9,304.9 363.8,310 354.5,314.7 344.3,319.1 333.2,323 321.2,326.3 308.6,329.2 295.4,331.4 281.9,332.9 268.1,333.8 254.2,334 240.5,333.6 227,332.4 214,330.6 201.5,328.2 189.8,325.2 178.9,321.6 169,317.6 160.1,313.1 152.3,308.3 145.6,303.2 140.1,297.8 135.7,292.3 132.5,286.7 130.5,281 129.5,275.3 129.7,269.6 130.8,264 133,258.6 136,253.3 139.9,248.2 144.6,243.3 150,238.7 156.1,234.3 162.8,230.2 170,226.4 177.7,222.9 185.9,219.7 194.4,216.9 203.3,214.4 212.4,212.2 221.8,210.3 231.3,208.8 241,207.6 250.8,206.7 260.6,206.2 270.5,206.1 280.3,206.3 290,206.8 299.6,207.7 309.1,208.9 318.3,210.5 327.3,212.4 336,214.7 344.4,217.3 352.3,220.2 359.8,223.5 366.8,227.1 373.2,231 378.9,235.1 384,239.6 388.4,244.4 392,249.3 394.6,254.5 396.4,259.9 397.2,265.5 396.9,271.1 395.6,276.9" fill="rgb(7,255,0)"/>
<polygon points="391.1,282.3 387.5,287.9 382.9,293.4 377.1,298.8 370.1,304.1 362.1,309 353,313.6 343,317.9 332.1,321.7 320.4,325 308,327.7 295.1,329.8 281.8,331.4 268.3,332.2 254.7,332.4 241.2,332 228,330.8 215.2,329.1 203,326.7 191.5,323.8 180.8,320.3 171,316.4 162.3,312 154.6,307.3 148,302.3 142.5,297 138.2,291.6 135,286.1 133,280.5 132,274.9 132.1,269.4 133.2,263.9 135.2,258.5 138.2,253.4 142,248.3 146.6,243.6 151.9,239 157.8,234.7 164.4,230.7 171.5,226.9 179,223.5 187.1,220.4 195.4,217.6 204.2,215.1 213.2,212.9 222.4,211.1 231.8,209.6 241.3,208.4 251,207.6 260.7,207.1 270.4,206.9 280.1,207.1 289.7,207.7 299.1,208.5 308.5,209.8 317.6,211.3 326.4,213.2 335,215.5 343.2,218 351,220.9 358.4,224.1 365.3,227.7 371.6,231.5 377.3,235.6 382.3,240 386.5,244.7 390,249.6 392.6,254.7 394.3,260 395.1,265.4 394.8,271 393.5,276.6" fill="rgb(25,255,0)"/>
<polygon points="389,281.9 385.5,287.4 380.9,292.8 375.2,298.1 368.3,303.2 360.5,308 351.6,312.5 341.7,316.7 331,320.4 319.5,323.6 307.4,326.3 294.7,328.3 281.7,329.8 268.5,330.7 255.2,330.9 242,330.4 229,329.3 216.5,327.6 204.5,325.3 193.2,322.4 182.7,319 173.1,315.1 164.5,310.9 156.9,306.3 150.4,301.4 145,296.3 140.7,291 137.5,285.5 135.4,280.1 134.5,274.6 134.5,269.1 135.5,263.8 137.5,258.5 140.4,253.4 144,248.5 148.5,243.8 153.7,239.3 159.5,235.1 165.9,231.2 172.9,227.5 180.4,224.1 188.2,221 196.5,218.2 205.1,215.8 213.9,213.6 223,211.8 232.3,210.4 241.7,209.2 251.2,208.4 260.7,207.9 270.3,207.8 279.8,208 289.3,208.5 298.7,209.4 307.8,210.6 316.8,212.1 325.6,214 334,216.2 342.1,218.7 349.8,221.6 357,224.8 363.8,228.2 370,232 375.6,236.1 380.5,240.4 384.7,245 388.1,249.8 390.6,254.8 392.3,260 393,265.4 392.7,270.8 391.4,276.3" fill="rgb(43,255,0)"/>
<polygon points="386.9,281.5 383.4,286.9 378.9,292.2 373.3,297.4 366.6,302.4 358.8,307.1 350.1,311.5 340.4,315.5 329.9,319.1 318.6,322.2 306.7,324.8 294.4,326.9 281.6,328.3 268.6,329.1 255.6,329.3 242.7,328.8 230,327.8 217.7,326.1 206,323.8 194.9,321 184.6,317.7 175.1,313.9 166.6,309.8 159.2,305.3 152.7,300.5 147.4,295.5 143.1,290.3 140,285 137.9,279.6 136.9,274.3 136.9,268.9 137.9,263.7 139.8,258.5 142.5,253.5 146.1,248.7 150.5,244.1 155.5,239.7 161.2,235.5 167.5,231.6 174.4,228 181.7,224.7 189.4,221.6 197.5,218.9 205.9,216.5 214.7,214.4 223.6,212.6 232.7,211.2 242,210 251.4,209.2 260.8,208.8 270.2,208.6 279.6,208.8 288.9,209.4 298.2,210.2 307.2,211.4 316.1,212.9 324.7,214.8 333,217 341,219.5 348.5,222.3 355.7,225.4 362.3,228.8 368.4,232.6 373.9,236.6 378.7,240.8 382.8,245.3 386.1,250 388.6,255 390.2,260.1 390.9,265.3 390.6,270.7 389.3,276.1" fill="rgb(60,255,0)"/>
<polygon points="384.8,281.1 381.4,286.4 376.9,291.6 371.4,296.7 364.8,301.5 357.2,306.1 348.6,310.4 339.1,314.3 328.8,317.8 317.8,320.9 306.1,323.4 294,325.4 281.5,326.8 268.8,327.6 256,327.7 243.4,327.3 231,326.2 218.9,324.6 207.4,322.4 196.5,319.6 186.4,316.4 177.1,312.7 168.8,308.7 161.4,304.3 155.1,299.6 149.8,294.7 145.6,289.6 142.5,284.5 140.4,279.2 139.3,274 139.3,268.7 140.2,263.6 142,258.5 144.7,253.6 148.2,248.9 152.4,244.3 157.4,240 162.9,235.9 169.1,232.1 175.8,228.5 183,225.3 190.6,222.3 198.6,219.6 206.8,217.2 215.4,215.1 224.2,213.4 233.2,212 242.3,210.8 251.6,210.1 260.8,209.6 270.1,209.5 279.4,209.7 288.6,210.2 297.7,211.1 306.6,212.2 315.3,213.7 323.8,215.6 332,217.7 339.8,220.2 347.3,223 354.3,226 360.8,229.4 366.8,233.1 372.2,237 376.9,241.2 380.9,245.6 384.2,250.3 386.6,255.1 388.2,260.1 388.8,265.3 388.5,270.5 387.2,275.8" fill="rgb(73,255,0)"/>
<polygon points="382.7,280.8 379.4,285.9 374.9,291 369.5,295.9 363,300.7 355.5,305.2 347.1,309.4 337.8,313.2 327.7,316.6 316.9,319.6 305.5,322 293.6,323.9 281.4,325.3 269,326 256.5,326.2 244.1,325.8 231.9,324.7 220.1,323.1 208.8,321 198.2,318.3 188.2,315.2 179.1,311.6 170.9,307.6 163.7,303.3 157.4,298.7 152.2,293.9 148.1,289 144.9,283.9 142.8,278.8 141.8,273.6 141.7,268.5 142.5,263.5 144.3,258.5 146.9,253.7 150.2,249 154.4,244.6 159.2,240.3 164.7,236.3 170.7,232.6 177.3,229.1 184.3,225.8 191.8,222.9 199.6,220.3 207.8,217.9 216.2,215.9 224.8,214.2 233.7,212.8 242.7,211.7 251.8,210.9 260.9,210.4 270.1,210.3 279.2,210.5 288.2,211 297.2,211.9 306,213.1 314.6,214.5 322.9,216.3 331,218.5 338.7,220.9 346,223.6 352.9,226.7 359.3,230 365.2,233.6 370.5,237.5 375.1,241.6 379.1,246 382.2,250.5 384.6,255.3 386.1,260.2 386.7,265.2 386.4,270.4 385.1,275.6" fill="rgb(87,255,0)"/>
<polygon points="380.7,280.4 377.3,285.4 373,290.4 367.6,295.2 361.3,299.8 353.9,304.2 345.7,308.3 336.5,312 326.6,315.4 316.1,318.2 304.9,320.6 293.3,322.5 281.3,323.8 269.1,324.5 256.9,324.7 244.8,324.3 232.9,323.3 221.3,321.7 210.2,319.6 199.8,317 190,313.9 181.1,310.4 173,306.5 165.9,302.3 159.8,297.9 154.6,293.2 150.5,288.3 147.4,283.4 145.3,278.4 144.2,273.3 144.1,268.3 144.8,263.4 146.5,258.5 149,253.8 152.3,249.2 156.3,244.8 161.1,240.7 166.4,236.7 172.3,233 178.7,229.6 185.6,226.4 193,223.5 200.7,220.9 208.7,218.6 217,216.6 225.5,214.9 234.2,213.6 243,212.5 252,211.7 261,211.3 270,211.2 279,211.4 287.9,211.9 296.7,212.7 305.4,213.9 313.8,215.3 322,217.1 330,219.2 337.6,221.6 344.8,224.3 351.6,227.3 357.9,230.6 363.6,234.1 368.8,237.9 373.3,242 377.2,246.3 380.3,250.7 382.6,255.4 384.1,260.2 384.7,265.2 384.3,270.2 383,275.3" fill="rgb(100,255,0)"/>
<polygon points="378.6,280 375.3,284.9 371,289.8 365.7,294.5 359.5,299 352.3,303.3 344.2,307.3 335.3,310.9 325.6,314.1 315.2,316.9 304.3,319.3 292.9,321.1 281.2,322.3 269.3,323.1 257.3,323.2 245.4,322.8 233.8,321.8 222.5,320.3 211.6,318.2 201.4,315.7 191.8,312.7 183.1,309.2 175.1,305.5 168.1,301.4 162.1,297 157,292.4 152.9,287.7 149.8,282.9 147.7,278 146.6,273 146.4,268.1 147.2,263.3 148.8,258.5 151.2,253.9 154.4,249.4 158.3,245.1 162.9,241 168.1,237.1 173.9,233.5 180.2,230.1 187,227 194.2,224.2 201.7,221.6 209.6,219.4 217.7,217.4 226.1,215.7 234.7,214.4 243.4,213.3 252.2,212.6 261,212.1 269.9,212 278.8,212.2 287.5,212.7 296.2,213.6 304.7,214.7 313.1,216.2 321.1,217.9 328.9,220 336.4,222.3 343.5,225 350.2,227.9 356.4,231.2 362,234.6 367.1,238.4 371.6,242.4 375.3,246.6 378.4,251 380.6,255.6 382,260.3 382.6,265.1 382.2,270.1 380.9,275" fill="rgb(113,255,0)"/>
<polygon points="376.5,279.6 373.3,284.5 369.1,289.2 363.9,293.8 357.7,298.2 350.7,302.4 342.7,306.2 334,309.8 324.5,312.9 314.4,315.6 303.7,317.9 292.5,319.7 281.1,320.9 269.4,321.6 257.7,321.7 246.1,321.3 234.7,320.3 223.6,318.8 213,316.8 203,314.4 193.6,311.4 185,308.1 177.2,304.4 170.3,300.4 164.4,296.2 159.3,291.7 155.3,287.1 152.3,282.3 150.2,277.5 149,272.7 148.8,267.9 149.5,263.2 151,258.5 153.3,254 156.5,249.6 160.3,245.4 164.8,241.3 169.9,237.5 175.5,234 181.7,230.7 188.3,227.6 195.4,224.8 202.8,222.3 210.5,220.1 218.5,218.1 226.8,216.5 235.2,215.2 243.7,214.1 252.4,213.4 261.1,213 269.8,212.9 278.6,213.1 287.2,213.6 295.7,214.4 304.1,215.5 312.3,217 320.3,218.7 327.9,220.7 335.3,223.1 342.2,225.7 348.8,228.6 354.9,231.7 360.4,235.2 365.4,238.8 369.8,242.8 373.5,246.9 376.4,251.2 378.6,255.7 380,260.3 380.5,265.1 380.1,269.9 378.8,274.8" fill="rgb(125,255,0)"/>
<polygon points="374.5,279.3 371.3,284 367.1,288.6 362,293.1 356,297.4 349.1,301.4 341.3,305.2 332.7,308.6 323.4,311.7 313.5,314.4 303,316.6 292.2,318.3 281,319.5 269.6,320.1 258.1,320.3 246.8,319.9 235.6,318.9 224.8,317.5 214.4,315.5 204.6,313.1 195.4,310.2 186.9,307 179.3,303.4 172.5,299.5 166.6,295.3 161.7,291 157.7,286.5 154.7,281.8 152.6,277.1 151.4,272.4 151.2,267.7 151.8,263.1 153.3,258.5 155.5,254 158.5,249.7 162.2,245.6 166.6,241.7 171.6,237.9 177.1,234.4 183.2,231.2 189.7,228.2 196.6,225.4 203.9,223 211.5,220.8 219.3,218.9 227.4,217.3 235.7,216 244.1,215 252.6,214.2 261.2,213.8 269.8,213.7 278.3,213.9 286.8,214.4 295.2,215.2 303.5,216.3 311.5,217.8 319.4,219.5 326.9,221.5 334.1,223.8 341,226.3 347.4,229.2 353.4,232.3 358.8,235.7 363.7,239.3 368,243.1 371.6,247.2 374.5,251.4 376.6,255.8 377.9,260.4 378.4,265 378,269.7 376.7,274.5" fill="rgb(138,255,0)"/>
<polygon points="372.4,278.9 369.3,283.5 365.2,288 360.2,292.4 354.3,296.6 347.5,300.5 339.9,304.2 331.5,307.5 322.4,310.5 312.7,313.1 302.4,315.2 291.8,316.9 280.8,318 269.7,318.7 258.5,318.8 247.4,318.4 236.5,317.5 225.9,316.1 215.7,314.2 206.1,311.8 197.1,309 188.8,305.9 181.3,302.4 174.7,298.6 168.9,294.5 164,290.2 160.1,285.8 157.1,281.3 155,276.7 153.8,272.1 153.5,267.5 154.1,263 155.5,258.5 157.7,254.1 160.6,249.9 164.2,245.9 168.5,242 173.3,238.4 178.8,234.9 184.7,231.7 191,228.8 197.8,226.1 204.9,223.7 212.4,221.5 220.1,219.6 228.1,218.1 236.2,216.8 244.5,215.8 252.8,215.1 261.3,214.7 269.7,214.6 278.1,214.8 286.5,215.3 294.8,216.1 302.9,217.2 310.8,218.6 318.5,220.2 325.9,222.2 333,224.5 339.7,227 346,229.8 351.9,232.9 357.2,236.2 362,239.7 366.2,243.5 369.7,247.5 372.5,251.7 374.6,256 375.9,260.4 376.3,265 375.9,269.6 374.6,274.2" fill="rgb(150,255,0)"/>
<polygon points="370.3,278.5 367.3,283 363.2,287.4 358.3,291.7 352.5,295.7 345.9,299.6 338.4,303.2 330.2,306.4 321.3,309.3 311.8,311.8 301.8,313.9 291.4,315.5 280.7,316.6 269.8,317.3 258.9,317.4 248.1,317 237.4,316.1 227,314.7 217.1,312.8 207.7,310.5 198.9,307.8 190.7,304.8 183.4,301.3 176.8,297.6 171.2,293.7 166.4,289.5 162.5,285.2 159.5,280.8 157.4,276.3 156.2,271.8 155.9,267.3 156.4,262.9 157.7,258.5 159.8,254.2 162.7,250.1 166.2,246.1 170.3,242.3 175.1,238.8 180.4,235.4 186.2,232.3 192.4,229.4 199,226.7 206,224.3 213.3,222.2 220.9,220.4 228.7,218.8 236.7,217.6 244.8,216.6 253.1,215.9 261.4,215.5 269.7,215.4 277.9,215.6 286.2,216.1 294.3,216.9 302.3,218 310,219.4 317.6,221 324.9,223 331.8,225.2 338.4,227.7 344.6,230.4 350.4,233.5 355.6,236.7 360.3,240.2 364.4,243.9 367.8,247.8 370.6,251.9 372.6,256.1 373.8,260.5 374.3,264.9 373.8,269.4 372.5,274" fill="rgb(162,255,0)"/>
<polygon points="368.3,278.1 365.2,282.5 361.3,286.8 356.5,291 350.8,294.9 344.3,298.7 337,302.2 328.9,305.4 320.3,308.2 311,310.6 301.2,312.6 291,314.2 280.6,315.3 270,315.9 259.3,316 248.7,315.6 238.3,314.7 228.1,313.3 218.4,311.5 209.2,309.3 200.6,306.7 192.6,303.7 185.4,300.3 179,296.7 173.4,292.9 168.7,288.8 164.8,284.6 161.9,280.3 159.8,275.9 158.6,271.5 158.2,267.1 158.7,262.8 160,258.5 162,254.3 164.8,250.3 168.2,246.4 172.2,242.7 176.8,239.2 182,235.9 187.7,232.8 193.8,229.9 200.3,227.4 207.1,225 214.3,223 221.7,221.2 229.4,219.6 237.2,218.4 245.2,217.4 253.3,216.8 261.4,216.4 269.6,216.3 277.7,216.5 285.8,217 293.8,217.8 301.6,218.8 309.3,220.2 316.7,221.8 323.9,223.7 330.7,225.9 337.2,228.4 343.2,231.1 348.9,234 354,237.2 358.6,240.6 362.6,244.3 365.9,248.1 368.6,252.1 370.6,256.2 371.8,260.5 372.2,264.8 371.8,269.3 370.5,273.7" fill="rgb(173,255,0)"/>
<polygon points="366.3,277.8 363.3,282 359.4,286.2 354.7,290.3 349.1,294.2 342.7,297.8 335.6,301.2 327.7,304.3 319.2,307 310.1,309.4 300.6,311.3 290.7,312.8 280.4,313.9 270.1,314.5 259.7,314.6 249.3,314.2 239.1,313.3 229.2,312 219.7,310.2 210.7,308.1 202.3,305.5 194.5,302.6 187.4,299.3 181.1,295.8 175.6,292.1 171,288.1 167.2,284 164.2,279.8 162.2,275.5 161,271.2 160.6,266.9 161,262.7 162.2,258.5 164.2,254.4 166.8,250.5 170.1,246.7 174.1,243 178.6,239.6 183.6,236.3 189.2,233.3 195.2,230.5 201.5,228 208.2,225.7 215.3,223.7 222.6,221.9 230.1,220.4 237.8,219.2 245.6,218.3 253.5,217.6 261.5,217.2 269.6,217.2 277.6,217.3 285.5,217.8 293.3,218.6 301,219.6 308.5,221 315.8,222.6 322.8,224.5 329.5,226.6 335.9,229 341.9,231.7 347.4,234.6 352.4,237.7 356.9,241.1 360.8,244.6 364.1,248.4 366.7,252.3 368.6,256.4 369.7,260.5 370.1,264.8 369.7,269.1 368.4,273.4" fill="rgb(182,255,0)"/>
<polygon points="364.2,277.4 361.3,281.6 357.5,285.7 352.8,289.6 347.4,293.4 341.1,296.9 334.1,300.2 326.5,303.2 318.1,305.9 309.3,308.2 300,310 290.3,311.5 280.3,312.5 270.2,313.1 260,313.2 249.9,312.8 240,312 230.3,310.7 221,309 212.2,306.9 204,304.3 196.3,301.5 189.4,298.3 183.2,294.9 177.8,291.3 173.3,287.4 169.5,283.4 166.6,279.3 164.6,275.2 163.3,271 162.9,266.8 163.3,262.6 164.5,258.5 166.3,254.5 168.9,250.6 172.1,246.9 176,243.4 180.4,240 185.3,236.8 190.7,233.9 196.5,231.1 202.8,228.6 209.3,226.4 216.2,224.4 223.4,222.7 230.8,221.2 238.3,220 246,219.1 253.8,218.5 261.6,218.1 269.5,218 277.4,218.2 285.1,218.7 292.8,219.4 300.4,220.5 307.8,221.8 314.9,223.4 321.8,225.2 328.4,227.3 334.6,229.7 340.5,232.3 345.9,235.2 350.8,238.2 355.2,241.5 359,245 362.2,248.7 364.7,252.5 366.6,256.5 367.7,260.6 368,264.7 367.6,268.9 366.3,273.2" fill="rgb(190,255,0)"/>
<polygon points="362.2,277 359.3,281.1 355.5,285.1 351,288.9 345.7,292.6 339.5,296 332.7,299.2 325.2,302.1 317.1,304.7 308.5,306.9 299.4,308.8 289.9,310.2 280.2,311.2 270.3,311.7 260.4,311.8 250.5,311.4 240.8,310.6 231.4,309.4 222.3,307.7 213.7,305.6 205.6,303.2 198.2,300.4 191.4,297.4 185.3,294 180,290.5 175.5,286.7 171.8,282.8 169,278.8 166.9,274.8 165.7,270.7 165.3,266.6 165.6,262.5 166.7,258.5 168.5,254.6 171,250.8 174.1,247.2 177.8,243.7 182.1,240.4 186.9,237.3 192.2,234.4 197.9,231.7 204,229.3 210.5,227.1 217.2,225.1 224.2,223.4 231.4,222 238.8,220.8 246.4,219.9 254,219.3 261.7,218.9 269.5,218.9 277.2,219.1 284.8,219.5 292.4,220.3 299.8,221.3 307,222.6 314,224.1 320.8,226 327.2,228 333.3,230.4 339.1,232.9 344.3,235.7 349.2,238.7 353.5,242 357.2,245.4 360.3,249 362.8,252.7 364.6,256.6 365.7,260.6 366,264.7 365.5,268.8 364.3,272.9" fill="rgb(199,255,0)"/>
<polygon points="360.1,276.7 357.3,280.6 353.6,284.5 349.2,288.2 344,291.8 338,295.2 331.3,298.3 324,301.1 316.1,303.6 307.6,305.7 298.7,307.5 289.5,308.9 280,309.9 270.4,310.4 260.7,310.5 251.1,310.1 241.6,309.3 232.4,308.1 223.6,306.5 215.2,304.5 207.3,302.1 200,299.4 193.3,296.4 187.4,293.2 182.2,289.7 177.8,286 174.2,282.3 171.3,278.4 169.3,274.4 168.1,270.4 167.6,266.4 167.9,262.4 168.9,258.5 170.7,254.7 173.1,251 176.1,247.5 179.7,244 183.9,240.8 188.6,237.8 193.7,234.9 199.3,232.3 205.3,229.9 211.6,227.8 218.2,225.9 225.1,224.2 232.1,222.8 239.4,221.6 246.8,220.8 254.3,220.1 261.8,219.8 269.4,219.7 277,219.9 284.5,220.4 291.9,221.1 299.2,222.1 306.3,223.4 313.1,224.9 319.8,226.7 326.1,228.7 332.1,231 337.7,233.5 342.8,236.3 347.5,239.3 351.7,242.4 355.4,245.8 358.4,249.3 360.8,252.9 362.6,256.7 363.6,260.6 363.9,264.6 363.4,268.6 362.2,272.7" fill="rgb(208,255,0)"/>
<polygon points="358.1,276.3 355.3,280.2 351.7,283.9 347.4,287.6 342.3,291 336.4,294.3 329.9,297.3 322.7,300 315,302.5 306.8,304.6 298.1,306.3 289.1,307.6 279.9,308.5 270.5,309 261.1,309.1 251.7,308.8 242.5,308 233.5,306.8 224.8,305.2 216.6,303.3 208.9,301 201.8,298.4 195.3,295.4 189.5,292.3 184.4,288.9 180,285.4 176.5,281.7 173.7,277.9 171.6,274 170.4,270.1 169.9,266.2 170.2,262.4 171.2,258.5 172.8,254.8 175.2,251.2 178.1,247.7 181.6,244.4 185.7,241.2 190.3,238.3 195.3,235.5 200.7,232.9 206.6,230.6 212.7,228.5 219.2,226.6 225.9,225 232.8,223.6 239.9,222.5 247.2,221.6 254.5,221 262,220.7 269.4,220.6 276.8,220.8 284.1,221.2 291.4,222 298.5,223 305.5,224.2 312.2,225.7 318.7,227.5 324.9,229.5 330.8,231.7 336.3,234.2 341.3,236.9 345.9,239.8 350,242.9 353.6,246.1 356.5,249.6 358.9,253.2 360.6,256.9 361.6,260.7 361.8,264.5 361.4,268.5 360.1,272.4" fill="rgb(218,255,0)"/>
<polygon points="356.1,275.9 353.3,279.7 349.8,283.3 345.6,286.9 340.6,290.3 334.9,293.4 328.5,296.3 321.5,299 314,301.4 306,303.4 297.5,305.1 288.8,306.3 279.8,307.2 270.6,307.7 261.4,307.8 252.3,307.4 243.3,306.7 234.5,305.5 226.1,304 218.1,302.1 210.6,299.9 203.6,297.3 197.2,294.5 191.5,291.4 186.5,288.2 182.3,284.7 178.8,281.1 176,277.4 174,273.6 172.8,269.8 172.3,266 172.5,262.3 173.4,258.6 175,254.9 177.2,251.4 180.1,248 183.5,244.7 187.5,241.6 191.9,238.7 196.8,236 202.1,233.5 207.8,231.2 213.9,229.1 220.2,227.3 226.8,225.7 233.5,224.4 240.5,223.3 247.6,222.4 254.8,221.8 262.1,221.5 269.3,221.5 276.6,221.6 283.8,222.1 290.9,222.8 297.9,223.8 304.7,225 311.3,226.5 317.7,228.2 323.8,230.2 329.5,232.4 334.9,234.8 339.8,237.4 344.3,240.3 348.3,243.3 351.8,246.5 354.7,249.9 356.9,253.4 358.6,257 359.5,260.7 359.8,264.5 359.3,268.3 358.1,272.1" fill="rgb(229,255,0)"/>
<polygon points="354.1,275.6 351.4,279.2 347.9,282.8 343.8,286.2 338.9,289.5 333.3,292.6 327.1,295.4 320.3,298 312.9,300.3 305.1,302.2 296.9,303.8 288.4,305.1 279.6,305.9 270.7,306.4 261.7,306.5 252.8,306.1 244.1,305.4 235.5,304.3 227.3,302.8 219.5,300.9 212.2,298.8 205.4,296.3 199.2,293.6 193.6,290.6 188.7,287.4 184.5,284 181,280.5 178.3,276.9 176.3,273.3 175.1,269.6 174.6,265.9 174.8,262.2 175.6,258.6 177.2,255 179.3,251.6 182.1,248.3 185.4,245.1 189.3,242.1 193.6,239.2 198.4,236.6 203.6,234.1 209.1,231.9 215,229.8 221.2,228 227.6,226.5 234.3,225.2 241.1,224.1 248,223.3 255.1,222.7 262.2,222.4 269.3,222.3 276.4,222.5 283.5,223 290.5,223.7 297.3,224.6 304,225.8 310.4,227.3 316.7,228.9 322.6,230.9 328.2,233 333.4,235.4 338.3,238 342.7,240.8 346.6,243.7 350,246.9 352.8,250.1 355,253.6 356.6,257.1 357.5,260.7 357.7,264.4 357.2,268.1 356,271.9" fill="rgb(239,255,0)"/>
<polygon points="352.1,275.2 349.4,278.8 346.1,282.2 342,285.5 337.2,288.7 331.8,291.7 325.7,294.5 319.1,297 311.9,299.2 304.3,301.1 296.3,302.6 288,303.8 279.5,304.7 270.8,305.1 262.1,305.2 253.4,304.8 244.9,304.1 236.6,303 228.6,301.6 220.9,299.8 213.8,297.7 207.1,295.3 201.1,292.6 195.6,289.7 190.8,286.6 186.7,283.4 183.3,280 180.6,276.5 178.7,272.9 177.4,269.3 176.9,265.7 177,262.1 177.9,258.6 179.3,255.1 181.4,251.8 184.1,248.5 187.3,245.4 191.1,242.5 195.3,239.7 199.9,237.1 205,234.7 210.4,232.5 216.2,230.5 222.2,228.8 228.5,227.2 235,226 241.6,224.9 248.4,224.1 255.3,223.5 262.3,223.2 269.3,223.2 276.3,223.4 283.2,223.8 290,224.5 296.7,225.4 303.2,226.6 309.5,228 315.6,229.7 321.4,231.6 326.9,233.7 332,236 336.8,238.5 341,241.3 344.9,244.2 348.1,247.2 350.9,250.4 353,253.8 354.6,257.2 355.5,260.7 355.7,264.3 355.2,268 354,271.6" fill="rgb(250,255,0)"/>
<polygon points="350.1,274.8 347.5,278.3 344.2,281.7 340.2,284.9 335.5,288 330.2,290.9 324.3,293.5 317.9,296 310.9,298.1 303.5,299.9 295.7,301.4 287.6,302.6 279.3,303.4 270.9,303.8 262.4,303.9 254,303.6 245.7,302.9 237.6,301.8 229.8,300.4 222.3,298.7 215.4,296.6 208.9,294.3 203,291.7 197.6,288.9 192.9,285.9 188.9,282.7 185.6,279.4 182.9,276 181,272.6 179.8,269 179.2,265.5 179.3,262 180.1,258.6 181.5,255.2 183.5,252 186.1,248.8 189.2,245.8 192.9,242.9 197,240.2 201.5,237.6 206.4,235.3 211.7,233.1 217.3,231.2 223.2,229.5 229.4,228 235.7,226.8 242.2,225.7 248.9,224.9 255.6,224.4 262.4,224.1 269.3,224 276.1,224.2 282.8,224.7 289.5,225.3 296.1,226.3 302.5,227.4 308.6,228.8 314.6,230.4 320.3,232.3 325.6,234.3 330.6,236.6 335.2,239.1 339.4,241.7 343.1,244.6 346.3,247.6 349,250.7 351.1,254 352.6,257.3 353.4,260.8 353.6,264.3 353.1,267.8 351.9,271.3" fill="rgb(255,249,0)"/>
<polygon points="348,274.5 345.5,277.8 342.3,281.1 338.4,284.2 333.9,287.2 328.7,290 322.9,292.6 316.6,294.9 309.9,297 302.6,298.8 295.1,300.3 287.2,301.4 279.1,302.2 270.9,302.6 262.7,302.6 254.5,302.3 246.4,301.6 238.6,300.6 231,299.2 223.7,297.6 216.9,295.6 210.6,293.3 204.8,290.8 199.6,288.1 195,285.2 191.1,282.1 187.8,278.9 185.2,275.6 183.3,272.2 182.1,268.8 181.5,265.4 181.6,262 182.3,258.6 183.7,255.3 185.6,252.1 188.1,249.1 191.1,246.1 194.7,243.3 198.6,240.7 203.1,238.2 207.9,235.9 213,233.8 218.5,231.9 224.2,230.2 230.2,228.8 236.4,227.6 242.8,226.6 249.3,225.8 255.9,225.3 262.6,225 269.2,224.9 275.9,225.1 282.5,225.5 289,226.2 295.5,227.1 301.7,228.2 307.7,229.6 313.6,231.2 319.1,233 324.3,235 329.2,237.2 333.7,239.6 337.8,242.2 341.4,245 344.5,247.9 347.1,251 349.1,254.2 350.6,257.4 351.4,260.8 351.6,264.2 351.1,267.6 349.9,271.1" fill="rgb(255,237,0)"/>
<polygon points="346,274.1 343.6,277.4 340.4,280.5 336.6,283.6 332.2,286.5 327.2,289.2 321.6,291.7 315.4,294 308.8,296 301.8,297.7 294.5,299.1 286.8,300.2 279,300.9 271,301.3 263,301.4 255,301 247.2,300.4 239.5,299.4 232.2,298.1 225.1,296.4 218.5,294.5 212.3,292.3 206.7,289.9 201.6,287.3 197.1,284.4 193.3,281.4 190.1,278.3 187.5,275.1 185.6,271.8 184.4,268.5 183.8,265.2 183.9,261.9 184.6,258.6 185.8,255.4 187.7,252.3 190.1,249.3 193,246.5 196.5,243.7 200.3,241.1 204.6,238.7 209.3,236.5 214.3,234.4 219.7,232.6 225.3,231 231.1,229.5 237.2,228.3 243.4,227.4 249.7,226.6 256.2,226.1 262.7,225.8 269.2,225.8 275.7,226 282.2,226.4 288.6,227 294.8,227.9 300.9,229 306.8,230.4 312.5,231.9 317.9,233.7 323,235.7 327.8,237.8 332.2,240.2 336.2,242.7 339.7,245.4 342.7,248.3 345.2,251.3 347.2,254.4 348.6,257.5 349.3,260.8 349.5,264.1 349,267.5 347.9,270.8" fill="rgb(255,225,0)"/>
<polygon points="344,273.8 341.6,276.9 338.5,280 334.8,282.9 330.5,285.7 325.6,288.4 320.2,290.8 314.2,293 307.8,294.9 301,296.6 293.9,297.9 286.4,299 278.8,299.7 271.1,300.1 263.3,300.1 255.6,299.8 247.9,299.2 240.5,298.2 233.3,296.9 226.5,295.3 220,293.5 214.1,291.4 208.6,289 203.6,286.4 199.2,283.7 195.5,280.8 192.3,277.8 189.8,274.7 187.9,271.5 186.7,268.3 186.1,265 186.1,261.8 186.8,258.7 188,255.6 189.8,252.5 192.1,249.6 195,246.8 198.3,244.1 202,241.6 206.2,239.3 210.8,237.1 215.6,235.1 220.8,233.3 226.3,231.7 232,230.3 237.9,229.1 244,228.2 250.2,227.5 256.5,227 262.8,226.7 269.2,226.6 275.6,226.8 281.9,227.2 288.1,227.9 294.2,228.8 300.2,229.8 305.9,231.1 311.5,232.7 316.8,234.4 321.7,236.3 326.4,238.4 330.7,240.8 334.5,243.2 337.9,245.9 340.9,248.6 343.3,251.5 345.2,254.6 346.6,257.7 347.3,260.8 347.4,264.1 347,267.3 345.8,270.5" fill="rgb(255,213,0)"/>
<polygon points="342.1,273.4 339.7,276.5 336.7,279.4 333.1,282.3 328.9,285 324.1,287.5 318.8,289.9 313,292 306.8,293.9 300.2,295.5 293.2,296.8 286,297.8 278.7,298.5 271.1,298.8 263.6,298.9 256.1,298.6 248.7,298 241.5,297 234.5,295.8 227.9,294.3 221.6,292.5 215.7,290.4 210.4,288.1 205.6,285.6 201.3,283 197.6,280.2 194.5,277.2 192.1,274.2 190.2,271.1 189,268 188.4,264.9 188.4,261.8 189,258.7 190.2,255.7 191.9,252.7 194.1,249.9 196.9,247.1 200.1,244.6 203.7,242.1 207.8,239.8 212.2,237.7 217,235.7 222,234 227.4,232.4 232.9,231.1 238.7,229.9 244.6,229 250.6,228.3 256.8,227.8 263,227.6 269.2,227.5 275.4,227.7 281.6,228.1 287.6,228.7 293.6,229.6 299.4,230.6 305,231.9 310.4,233.4 315.6,235.1 320.4,237 325,239.1 329.1,241.3 332.9,243.7 336.2,246.3 339.1,249 341.4,251.8 343.3,254.7 344.6,257.8 345.3,260.9 345.4,264 344.9,267.1 343.8,270.3" fill="rgb(255,201,0)"/>
<polygon points="340.1,273 337.7,276 334.8,278.9 331.3,281.6 327.2,284.3 322.6,286.7 317.4,289 311.8,291 305.8,292.8 299.4,294.4 292.6,295.6 285.6,296.6 278.5,297.3 271.2,297.6 263.9,297.7 256.6,297.4 249.4,296.8 242.4,295.9 235.7,294.7 229.2,293.2 223.1,291.4 217.4,289.5 212.2,287.2 207.5,284.8 203.4,282.3 199.8,279.6 196.7,276.7 194.3,273.8 192.5,270.8 191.3,267.8 190.7,264.7 190.7,261.7 191.2,258.7 192.3,255.8 194,252.9 196.2,250.2 198.8,247.5 201.9,245 205.5,242.6 209.4,240.4 213.7,238.3 218.3,236.4 223.2,234.7 228.4,233.2 233.8,231.9 239.4,230.8 245.2,229.8 251.1,229.2 257.1,228.7 263.1,228.4 269.2,228.4 275.2,228.6 281.2,229 287.2,229.6 293,230.4 298.7,231.5 304.1,232.7 309.4,234.2 314.4,235.8 319.1,237.6 323.5,239.7 327.6,241.8 331.2,244.2 334.5,246.7 337.2,249.3 339.5,252.1 341.3,254.9 342.6,257.9 343.2,260.9 343.4,263.9 342.9,267 341.8,270" fill="rgb(255,190,0)"/>
<polygon points="338.1,272.7 335.8,275.5 333,278.3 329.6,281 325.6,283.5 321.1,285.9 316.1,288.1 310.6,290.1 304.8,291.8 298.6,293.3 292,294.5 285.3,295.4 278.3,296.1 271.3,296.4 264.2,296.4 257.1,296.2 250.1,295.6 243.4,294.7 236.8,293.5 230.5,292.1 224.6,290.4 219.1,288.5 214,286.4 209.5,284.1 205.4,281.6 201.9,278.9 198.9,276.2 196.6,273.4 194.8,270.5 193.6,267.5 193,264.6 192.9,261.6 193.5,258.7 194.5,255.9 196.1,253.1 198.2,250.4 200.7,247.8 203.8,245.4 207.2,243.1 211,240.9 215.1,238.9 219.6,237 224.4,235.4 229.5,233.9 234.7,232.6 240.2,231.6 245.8,230.7 251.5,230 257.4,229.5 263.3,229.3 269.2,229.3 275.1,229.4 280.9,229.8 286.7,230.4 292.4,231.2 297.9,232.3 303.2,233.5 308.4,234.9 313.2,236.5 317.8,238.3 322.1,240.3 326,242.4 329.6,244.7 332.7,247.1 335.4,249.7 337.6,252.4 339.4,255.1 340.6,258 341.2,260.9 341.3,263.8 340.8,266.8 339.7,269.8" fill="rgb(255,179,0)"/>
<polygon points="336.1,272.3 333.9,275.1 331.1,277.8 327.8,280.4 323.9,282.8 319.6,285.1 314.7,287.2 309.4,289.1 303.8,290.8 297.7,292.2 291.4,293.4 284.9,294.3 278.1,294.9 271.3,295.2 264.4,295.2 257.6,295 250.9,294.4 244.3,293.6 237.9,292.4 231.9,291.1 226.1,289.4 220.8,287.6 215.8,285.5 211.4,283.3 207.4,280.9 204,278.3 201.1,275.7 198.8,272.9 197.1,270.1 195.9,267.3 195.3,264.4 195.2,261.6 195.7,258.8 196.7,256 198.2,253.3 200.2,250.7 202.7,248.2 205.6,245.8 208.9,243.6 212.6,241.4 216.6,239.5 221,237.7 225.6,236.1 230.5,234.7 235.6,233.4 241,232.4 246.4,231.5 252,230.9 257.7,230.4 263.4,230.2 269.2,230.1 274.9,230.3 280.6,230.7 286.2,231.3 291.8,232.1 297.1,233.1 302.3,234.3 307.3,235.6 312.1,237.2 316.5,239 320.7,240.9 324.5,242.9 328,245.2 331,247.5 333.6,250 335.7,252.6 337.4,255.3 338.6,258.1 339.2,260.9 339.3,263.8 338.8,266.6 337.7,269.5" fill="rgb(255,170,0)"/>
<polygon points="334.1,272 332,274.6 329.3,277.2 326.1,279.7 322.3,282.1 318.1,284.3 313.4,286.3 308.3,288.2 302.8,289.8 296.9,291.1 290.8,292.3 284.5,293.1 278,293.7 271.4,294 264.7,294.1 258.1,293.8 251.6,293.3 245.2,292.4 239.1,291.4 233.2,290 227.6,288.4 222.4,286.7 217.6,284.7 213.3,282.5 209.5,280.2 206.1,277.7 203.3,275.2 201.1,272.5 199.3,269.8 198.2,267 197.5,264.3 197.5,261.5 197.9,258.8 198.9,256.1 200.3,253.5 202.2,251 204.6,248.5 207.4,246.2 210.6,244 214.2,242 218.1,240.1 222.3,238.4 226.8,236.8 231.6,235.4 236.6,234.2 241.7,233.2 247,232.3 252.5,231.7 258,231.3 263.6,231 269.2,231 274.8,231.2 280.3,231.6 285.8,232.1 291.1,232.9 296.4,233.9 301.4,235 306.3,236.4 310.9,237.9 315.2,239.6 319.3,241.5 323,243.5 326.3,245.6 329.3,247.9 331.8,250.4 333.9,252.9 335.5,255.5 336.6,258.2 337.2,260.9 337.2,263.7 336.7,266.5 335.7,269.2" fill="rgb(255,161,0)"/>
<polygon points="332.1,271.6 330.1,274.2 327.4,276.7 324.3,279.1 320.7,281.4 316.6,283.5 312,285.5 307.1,287.2 301.8,288.8 296.1,290.1 290.2,291.2 284.1,292 277.8,292.6 271.4,292.9 265,292.9 258.6,292.6 252.3,292.1 246.1,291.3 240.2,290.3 234.5,289 229.1,287.5 224.1,285.7 219.4,283.8 215.2,281.7 211.5,279.5 208.2,277.1 205.5,274.6 203.3,272.1 201.6,269.5 200.4,266.8 199.8,264.1 199.7,261.5 200.1,258.8 201,256.2 202.4,253.7 204.3,251.3 206.6,248.9 209.3,246.7 212.4,244.5 215.8,242.5 219.6,240.7 223.7,239 228.1,237.5 232.7,236.1 237.5,235 242.5,234 247.7,233.2 252.9,232.6 258.3,232.1 263.7,231.9 269.2,231.9 274.6,232.1 280,232.4 285.3,233 290.5,233.7 295.6,234.7 300.5,235.8 305.2,237.1 309.7,238.6 313.9,240.3 317.8,242.1 321.4,244 324.7,246.1 327.5,248.4 330,250.7 332,253.1 333.5,255.7 334.6,258.3 335.1,260.9 335.2,263.6 334.7,266.3 333.7,269" fill="rgb(255,152,0)"/>
<polygon points="330.2,271.2 328.1,273.7 325.6,276.2 322.6,278.5 319.1,280.7 315.1,282.7 310.7,284.6 305.9,286.3 300.8,287.8 295.3,289 289.6,290.1 283.7,290.9 277.6,291.4 271.4,291.7 265.2,291.7 259.1,291.5 253,291 247,290.2 241.3,289.2 235.8,288 230.5,286.5 225.7,284.8 221.2,283 217.1,281 213.5,278.8 210.3,276.5 207.7,274.1 205.5,271.7 203.9,269.1 202.7,266.6 202.1,264 202,261.4 202.3,258.9 203.2,256.4 204.5,253.9 206.3,251.5 208.5,249.2 211.1,247.1 214.1,245 217.4,243.1 221.1,241.3 225.1,239.7 229.3,238.2 233.8,236.9 238.4,235.7 243.3,234.8 248.3,234 253.4,233.4 258.6,233 263.9,232.8 269.2,232.8 274.5,232.9 279.7,233.3 284.9,233.8 289.9,234.6 294.8,235.5 299.6,236.6 304.2,237.9 308.5,239.3 312.6,240.9 316.4,242.7 319.9,244.6 323,246.6 325.8,248.8 328.1,251 330.1,253.4 331.5,255.9 332.6,258.4 333.1,260.9 333.1,263.5 332.7,266.1 331.7,268.7" fill="rgb(255,143,0)"/>
<polygon points="328.2,270.9 326.2,273.3 323.8,275.6 320.8,277.8 317.4,280 313.6,281.9 309.4,283.7 304.7,285.4 299.8,286.8 294.5,288 289,289 283.3,289.8 277.4,290.3 271.5,290.6 265.5,290.6 259.5,290.3 253.7,289.8 247.9,289.1 242.4,288.1 237,286.9 232,285.5 227.3,283.9 222.9,282.2 219,280.2 215.5,278.1 212.4,275.9 209.8,273.6 207.7,271.3 206.1,268.8 205,266.3 204.4,263.9 204.2,261.4 204.6,258.9 205.4,256.5 206.6,254.1 208.3,251.8 210.5,249.6 213,247.5 215.8,245.5 219.1,243.6 222.6,241.9 226.4,240.3 230.5,238.9 234.9,237.6 239.4,236.5 244.1,235.6 248.9,234.8 253.9,234.3 259,233.9 264.1,233.7 269.2,233.6 274.3,233.8 279.4,234.2 284.4,234.7 289.3,235.4 294.1,236.3 298.7,237.4 303.1,238.6 307.3,240 311.3,241.6 315,243.3 318.3,245.1 321.4,247.1 324,249.2 326.3,251.4 328.2,253.7 329.6,256 330.6,258.5 331.1,260.9 331.1,263.4 330.6,265.9 329.7,268.4" fill="rgb(255,134,0)"/>
<polygon points="326.2,270.5 324.3,272.8 322,275.1 319.1,277.2 315.8,279.3 312.1,281.1 308,282.9 303.6,284.4 298.8,285.8 293.7,287 288.4,287.9 282.9,288.7 277.2,289.2 271.5,289.4 265.7,289.4 260,289.2 254.3,288.7 248.8,288 243.4,287.1 238.3,285.9 233.4,284.6 228.9,283.1 224.7,281.3 220.9,279.5 217.5,277.5 214.5,275.4 212,273.1 209.9,270.9 208.4,268.5 207.3,266.1 206.6,263.7 206.5,261.3 206.8,258.9 207.6,256.6 208.8,254.3 210.4,252.1 212.4,250 214.8,247.9 217.6,246 220.7,244.2 224.1,242.5 227.8,241 231.8,239.6 236,238.4 240.3,237.3 244.9,236.4 249.6,235.7 254.4,235.1 259.3,234.7 264.2,234.5 269.2,234.5 274.2,234.7 279.1,235 283.9,235.5 288.7,236.2 293.3,237.1 297.8,238.1 302.1,239.3 306.1,240.7 310,242.2 313.5,243.9 316.8,245.6 319.7,247.6 322.3,249.6 324.5,251.7 326.3,253.9 327.6,256.2 328.6,258.6 329.1,260.9 329.1,263.4 328.6,265.8 327.7,268.2" fill="rgb(255,126,0)"/>
<polygon points="324.3,270.2 322.4,272.4 320.1,274.6 317.4,276.6 314.2,278.6 310.6,280.4 306.7,282 302.4,283.5 297.8,284.8 292.9,286 287.8,286.9 282.5,287.6 277.1,288 271.5,288.3 266,288.3 260.5,288.1 255,287.6 249.7,286.9 244.5,286.1 239.6,285 234.9,283.7 230.5,282.2 226.4,280.5 222.7,278.7 219.5,276.8 216.6,274.8 214.1,272.7 212.1,270.4 210.6,268.2 209.5,265.9 208.9,263.6 208.7,261.3 209,259 209.7,256.7 210.9,254.5 212.4,252.4 214.4,250.3 216.7,248.3 219.4,246.5 222.4,244.7 225.6,243.1 229.2,241.6 233,240.3 237.1,239.1 241.3,238.1 245.7,237.2 250.2,236.5 254.9,236 259.6,235.6 264.4,235.4 269.2,235.4 274,235.6 278.8,235.9 283.5,236.4 288.1,237.1 292.6,237.9 296.9,238.9 301,240.1 305,241.4 308.7,242.9 312.1,244.5 315.2,246.2 318.1,248 320.5,250 322.6,252 324.4,254.2 325.7,256.4 326.6,258.6 327,260.9 327,263.3 326.6,265.6 325.7,267.9" fill="rgb(255,119,0)"/>
<polygon points="322.3,269.8 320.5,272 318.3,274 315.7,276 312.6,277.9 309.2,279.6 305.4,281.2 301.2,282.6 296.8,283.9 292.1,285 287.2,285.8 282.1,286.5 276.9,286.9 271.6,287.2 266.2,287.2 260.9,287 255.7,286.5 250.5,285.9 245.6,285 240.8,284 236.3,282.7 232.1,281.3 228.2,279.7 224.6,278 221.4,276.2 218.6,274.2 216.3,272.2 214.3,270 212.8,267.9 211.8,265.7 211.1,263.4 211,261.2 211.2,259 211.9,256.8 213,254.7 214.5,252.6 216.3,250.7 218.6,248.8 221.1,247 224,245.3 227.2,243.7 230.6,242.3 234.3,241 238.2,239.9 242.3,238.9 246.5,238 250.9,237.3 255.4,236.8 260,236.5 264.6,236.3 269.2,236.3 273.9,236.4 278.5,236.8 283,237.2 287.5,237.9 291.8,238.7 296,239.7 300,240.8 303.8,242.1 307.3,243.5 310.6,245 313.7,246.7 316.4,248.5 318.8,250.4 320.8,252.4 322.5,254.4 323.7,256.6 324.6,258.7 325,261 325,263.2 324.6,265.4 323.7,267.6" fill="rgb(255,111,0)"/>
<polygon points="320.4,269.5 318.7,271.5 316.5,273.5 314,275.4 311,277.2 307.7,278.8 304,280.4 300.1,281.7 295.8,282.9 291.3,284 286.6,284.8 281.7,285.4 276.7,285.8 271.6,286.1 266.5,286.1 261.4,285.9 256.3,285.4 251.4,284.8 246.6,284 242,283 237.7,281.8 233.6,280.4 229.9,278.9 226.4,277.3 223.4,275.5 220.7,273.6 218.4,271.7 216.5,269.7 215,267.6 214,265.4 213.4,263.3 213.2,261.2 213.4,259 214.1,257 215.1,254.9 216.5,252.9 218.3,251 220.4,249.2 222.9,247.5 225.7,245.8 228.7,244.3 232,243 235.6,241.7 239.3,240.6 243.2,239.7 247.3,238.8 251.6,238.2 255.9,237.7 260.3,237.4 264.8,237.2 269.3,237.2 273.7,237.3 278.2,237.6 282.6,238.1 286.9,238.7 291,239.5 295.1,240.5 298.9,241.6 302.6,242.8 306,244.1 309.2,245.6 312.1,247.2 314.7,249 317,250.8 319,252.7 320.6,254.7 321.8,256.7 322.6,258.8 323,261 323,263.1 322.5,265.2 321.7,267.4" fill="rgb(255,104,0)"/>
<polygon points="318.4,269.1 316.8,271.1 314.7,273 312.2,274.8 309.4,276.5 306.2,278.1 302.7,279.5 298.9,280.8 294.8,282 290.5,283 286,283.8 281.3,284.4 276.5,284.8 271.6,285 266.7,285 261.8,284.8 257,284.4 252.2,283.8 247.7,283 243.3,282 239.1,280.9 235.2,279.6 231.6,278.1 228.3,276.6 225.3,274.9 222.7,273.1 220.5,271.2 218.7,269.3 217.3,267.3 216.3,265.2 215.7,263.2 215.5,261.1 215.7,259.1 216.3,257.1 217.2,255.1 218.6,253.2 220.3,251.4 222.3,249.6 224.7,248 227.3,246.4 230.2,245 233.4,243.6 236.8,242.4 240.4,241.4 244.2,240.4 248.2,239.7 252.2,239 256.4,238.6 260.7,238.2 265,238.1 269.3,238.1 273.6,238.2 277.9,238.5 282.1,239 286.2,239.6 290.3,240.3 294.1,241.2 297.9,242.3 301.4,243.5 304.7,244.8 307.8,246.2 310.6,247.8 313.1,249.4 315.3,251.2 317.1,253 318.7,254.9 319.8,256.9 320.6,258.9 321,261 321,263 320.5,265.1 319.7,267.1" fill="rgb(255,97,0)"/>
<polygon points="316.5,268.8 314.9,270.6 312.9,272.5 310.5,274.2 307.8,275.8 304.8,277.3 301.4,278.7 297.8,280 293.8,281 289.7,282 285.4,282.7 280.9,283.3 276.3,283.7 271.6,283.9 266.9,283.9 262.2,283.7 257.6,283.3 253.1,282.7 248.7,282 244.5,281.1 240.5,280 236.7,278.7 233.3,277.4 230.1,275.9 227.2,274.2 224.7,272.5 222.6,270.7 220.9,268.9 219.5,267 218.5,265 217.9,263 217.7,261.1 217.9,259.1 218.4,257.2 219.4,255.3 220.6,253.5 222.3,251.7 224.2,250.1 226.5,248.5 229,247 231.8,245.6 234.8,244.3 238.1,243.1 241.6,242.1 245.2,241.2 249,240.5 252.9,239.9 256.9,239.4 261,239.1 265.2,238.9 269.3,238.9 273.5,239.1 277.6,239.4 281.6,239.8 285.6,240.4 289.5,241.1 293.2,242 296.8,243 300.2,244.2 303.4,245.4 306.3,246.8 309,248.3 311.4,249.9 313.5,251.6 315.3,253.3 316.8,255.2 317.9,257.1 318.6,259 319,261 318.9,262.9 318.5,264.9 317.7,266.9" fill="rgb(255,90,0)"/>
<polygon points="314.6,268.4 313,270.2 311.1,271.9 308.8,273.6 306.2,275.1 303.3,276.6 300.1,277.9 296.6,279.1 292.9,280.1 288.9,281 284.8,281.7 280.5,282.3 276.1,282.6 271.6,282.8 267.1,282.8 262.7,282.6 258.2,282.3 253.9,281.7 249.7,281 245.7,280.1 241.9,279.1 238.3,277.9 234.9,276.6 231.9,275.2 229.2,273.6 226.8,272 224.7,270.3 223,268.5 221.7,266.7 220.7,264.8 220.1,262.9 219.9,261 220.1,259.2 220.6,257.3 221.5,255.5 222.7,253.8 224.2,252.1 226.1,250.5 228.2,248.9 230.7,247.5 233.3,246.2 236.3,245 239.4,243.9 242.7,242.9 246.2,242 249.8,241.3 253.6,240.7 257.5,240.3 261.4,240 265.4,239.8 269.3,239.8 273.3,240 277.3,240.2 281.2,240.7 285,241.2 288.7,241.9 292.3,242.8 295.7,243.8 299,244.9 302,246.1 304.9,247.4 307.4,248.8 309.7,250.4 311.8,252 313.5,253.7 314.9,255.4 315.9,257.2 316.6,259.1 316.9,261 316.9,262.8 316.5,264.7 315.7,266.6" fill="rgb(255,83,0)"/>
<polygon points="312.6,268.1 311.1,269.8 309.3,271.4 307.2,273 304.7,274.5 301.9,275.8 298.8,277.1 295.5,278.2 291.9,279.2 288.1,280 284.2,280.7 280.1,281.2 275.9,281.6 271.6,281.7 267.4,281.7 263.1,281.6 258.9,281.2 254.7,280.7 250.7,280 246.9,279.2 243.2,278.2 239.8,277.1 236.6,275.8 233.7,274.5 231.1,273 228.8,271.4 226.8,269.8 225.2,268.1 223.9,266.4 223,264.6 222.4,262.8 222.2,261 222.3,259.2 222.8,257.5 223.6,255.7 224.8,254.1 226.2,252.5 228,250.9 230,249.4 232.3,248.1 234.9,246.8 237.7,245.6 240.7,244.6 243.9,243.6 247.2,242.8 250.7,242.1 254.3,241.6 258,241.1 261.8,240.9 265.6,240.7 269.4,240.7 273.2,240.8 277,241.1 280.7,241.5 284.4,242.1 288,242.8 291.4,243.6 294.7,244.5 297.8,245.6 300.7,246.7 303.4,248 305.9,249.4 308.1,250.8 310,252.4 311.6,254 313,255.7 314,257.4 314.6,259.2 314.9,261 314.9,262.8 314.5,264.5 313.7,266.3" fill="rgb(255,76,0)"/>
<polygon points="310.7,267.7 309.3,269.3 307.5,270.9 305.5,272.4 303.1,273.8 300.4,275.1 297.5,276.3 294.3,277.3 290.9,278.3 287.3,279.1 283.6,279.7 279.7,280.2 275.7,280.5 271.6,280.7 267.6,280.7 263.5,280.5 259.5,280.2 255.6,279.7 251.7,279 248.1,278.3 244.6,277.3 241.3,276.2 238.3,275.1 235.5,273.8 233,272.4 230.8,270.9 228.9,269.3 227.3,267.7 226.1,266.1 225.2,264.4 224.6,262.7 224.4,261 224.5,259.3 225,257.6 225.7,256 226.8,254.4 228.2,252.8 229.9,251.3 231.8,249.9 234,248.6 236.5,247.4 239.1,246.3 242,245.3 245,244.4 248.2,243.6 251.5,242.9 255,242.4 258.5,242 262.1,241.7 265.8,241.6 269.4,241.6 273.1,241.7 276.7,242 280.3,242.4 283.8,242.9 287.2,243.6 290.5,244.3 293.6,245.2 296.6,246.2 299.4,247.4 302,248.6 304.3,249.9 306.4,251.3 308.3,252.8 309.8,254.3 311.1,255.9 312,257.6 312.6,259.2 312.9,260.9 312.9,262.7 312.5,264.4 311.8,266.1" fill="rgb(255,69,0)"/>
<polygon points="308.8,267.4 307.4,268.9 305.7,270.4 303.8,271.8 301.5,273.1 299,274.3 296.2,275.5 293.2,276.5 289.9,277.4 286.5,278.1 283,278.7 279.3,279.2 275.5,279.5 271.6,279.6 267.8,279.6 263.9,279.5 260.1,279.2 256.4,278.7 252.7,278.1 249.3,277.3 245.9,276.4 242.8,275.4 239.9,274.3 237.3,273.1 234.9,271.8 232.8,270.4 231,268.9 229.5,267.3 228.3,265.8 227.4,264.2 226.9,262.6 226.6,260.9 226.7,259.3 227.2,257.7 227.9,256.2 228.9,254.6 230.2,253.2 231.8,251.8 233.6,250.4 235.7,249.2 238,248 240.6,247 243.3,246 246.2,245.1 249.2,244.4 252.4,243.8 255.7,243.3 259.1,242.9 262.5,242.6 266,242.5 269.5,242.5 273,242.6 276.4,242.9 279.8,243.2 283.2,243.7 286.4,244.4 289.6,245.1 292.6,246 295.4,246.9 298.1,248 300.5,249.2 302.7,250.4 304.7,251.7 306.5,253.2 308,254.6 309.2,256.2 310.1,257.7 310.6,259.3 310.9,260.9 310.9,262.6 310.5,264.2 309.8,265.8" fill="rgb(255,62,0)"/>
<polygon points="306.8,267 305.6,268.5 304,269.9 302.1,271.2 300,272.5 297.6,273.6 294.9,274.7 292,275.6 289,276.5 285.7,277.2 282.4,277.7 278.9,278.2 275.3,278.5 271.6,278.6 268,278.6 264.3,278.4 260.7,278.1 257.2,277.7 253.7,277.1 250.4,276.4 247.3,275.6 244.3,274.6 241.6,273.6 239,272.4 236.8,271.1 234.8,269.8 233,268.4 231.6,267 230.5,265.5 229.6,264 229.1,262.4 228.9,260.9 229,259.4 229.3,257.9 230,256.4 231,254.9 232.2,253.5 233.7,252.2 235.5,250.9 237.4,249.7 239.6,248.6 242,247.6 244.6,246.7 247.4,245.9 250.3,245.2 253.3,244.6 256.4,244.1 259.6,243.7 262.9,243.5 266.2,243.4 269.5,243.4 272.8,243.5 276.1,243.7 279.4,244.1 282.6,244.6 285.7,245.2 288.6,245.9 291.5,246.7 294.2,247.6 296.7,248.6 299.1,249.7 301.2,250.9 303.1,252.2 304.7,253.5 306.1,254.9 307.3,256.4 308.1,257.9 308.7,259.4 308.9,260.9 308.9,262.5 308.5,264 307.8,265.5" fill="rgb(255,55,0)"/>
<polygon points="304.9,266.7 303.7,268 302.2,269.4 300.4,270.6 298.4,271.8 296.1,272.9 293.6,273.9 290.9,274.8 288,275.6 285,276.2 281.8,276.8 278.5,277.2 275.1,277.4 271.6,277.6 268.2,277.6 264.7,277.4 261.3,277.1 258,276.7 254.7,276.2 251.6,275.5 248.6,274.7 245.8,273.8 243.2,272.8 240.8,271.7 238.7,270.5 236.7,269.3 235.1,268 233.7,266.6 232.6,265.2 231.8,263.8 231.3,262.3 231.1,260.9 231.2,259.4 231.5,258 232.1,256.6 233,255.2 234.2,253.9 235.6,252.6 237.3,251.4 239.1,250.3 241.2,249.3 243.5,248.3 245.9,247.4 248.5,246.7 251.3,246 254.2,245.4 257.1,245 260.2,244.6 263.3,244.4 266.4,244.3 269.6,244.3 272.7,244.4 275.9,244.6 278.9,245 282,245.4 284.9,246 287.7,246.7 290.4,247.4 293,248.3 295.4,249.3 297.6,250.3 299.6,251.5 301.4,252.7 303,253.9 304.3,255.3 305.3,256.6 306.1,258 306.7,259.5 306.9,260.9 306.8,262.4 306.5,263.8 305.9,265.3" fill="rgb(255,49,0)"/>
<polygon points="303,266.3 301.8,267.6 300.4,268.9 298.8,270 296.8,271.1 294.7,272.2 292.3,273.1 289.8,273.9 287,274.7 284.2,275.3 281.2,275.8 278,276.2 274.9,276.4 271.6,276.6 268.4,276.6 265.1,276.4 261.9,276.2 258.7,275.8 255.7,275.2 252.7,274.6 249.9,273.9 247.3,273 244.8,272.1 242.6,271.1 240.5,269.9 238.7,268.8 237.2,267.5 235.9,266.2 234.8,264.9 234.1,263.6 233.6,262.2 233.3,260.8 233.4,259.5 233.7,258.1 234.3,256.8 235.1,255.5 236.2,254.3 237.5,253.1 239.1,251.9 240.9,250.9 242.8,249.9 245,249 247.3,248.1 249.7,247.4 252.3,246.8 255,246.2 257.8,245.8 260.7,245.5 263.6,245.3 266.6,245.2 269.6,245.2 272.6,245.3 275.6,245.5 278.5,245.8 281.3,246.3 284.1,246.8 286.8,247.4 289.4,248.2 291.8,249 294,249.9 296.1,250.9 298,252 299.7,253.1 301.2,254.3 302.4,255.6 303.4,256.9 304.2,258.2 304.7,259.5 304.9,260.9 304.8,262.3 304.5,263.7 303.9,265" fill="rgb(255,45,0)"/>
<polygon points="301.1,266 300,267.2 298.7,268.4 297.1,269.5 295.3,270.5 293.3,271.4 291,272.3 288.6,273.1 286.1,273.8 283.4,274.4 280.6,274.8 277.6,275.2 274.6,275.4 271.6,275.5 268.6,275.5 265.5,275.4 262.5,275.2 259.5,274.8 256.6,274.3 253.9,273.7 251.2,273 248.7,272.2 246.4,271.4 244.3,270.4 242.4,269.4 240.7,268.3 239.2,267.1 238,265.9 237,264.6 236.3,263.4 235.8,262.1 235.6,260.8 235.6,259.5 235.9,258.3 236.4,257 237.2,255.8 238.2,254.6 239.5,253.5 240.9,252.4 242.6,251.4 244.4,250.5 246.4,249.6 248.6,248.9 250.9,248.2 253.4,247.6 255.9,247.1 258.6,246.7 261.3,246.4 264,246.2 266.8,246.1 269.7,246.1 272.5,246.2 275.3,246.4 278,246.7 280.7,247.1 283.4,247.6 285.9,248.2 288.3,248.9 290.6,249.7 292.7,250.5 294.7,251.5 296.5,252.5 298,253.6 299.4,254.7 300.6,255.9 301.5,257.1 302.2,258.3 302.7,259.6 302.9,260.9 302.8,262.2 302.5,263.5 301.9,264.7" fill="rgb(255,41,0)"/>
<polygon points="299.2,265.6 298.2,266.8 296.9,267.9 295.4,268.9 293.7,269.8 291.8,270.7 289.8,271.6 287.5,272.3 285.1,272.9 282.6,273.5 280,273.9 277.2,274.2 274.4,274.4 271.6,274.5 268.7,274.5 265.9,274.4 263.1,274.2 260.3,273.8 257.6,273.4 255,272.8 252.5,272.2 250.2,271.5 248,270.6 246,269.7 244.2,268.8 242.6,267.7 241.2,266.7 240.1,265.5 239.2,264.4 238.5,263.2 238,262 237.8,260.8 237.8,259.6 238.1,258.4 238.6,257.2 239.3,256.1 240.2,255 241.4,253.9 242.8,252.9 244.3,252 246,251.1 247.9,250.3 250,249.6 252.1,248.9 254.4,248.4 256.8,247.9 259.3,247.5 261.8,247.2 264.4,247 267.1,247 269.7,247 272.4,247.1 275,247.3 277.6,247.5 280.1,247.9 282.6,248.4 285,249 287.2,249.6 289.4,250.4 291.4,251.2 293.2,252.1 294.9,253 296.4,254 297.7,255.1 298.8,256.2 299.6,257.3 300.3,258.5 300.7,259.7 300.9,260.9 300.8,262.1 300.5,263.3 300,264.5" fill="rgb(255,37,0)"/>
<polygon points="297.3,265.3 296.3,266.3 295.1,267.3 293.8,268.3 292.2,269.2 290.4,270 288.5,270.8 286.4,271.5 284.2,272.1 281.8,272.6 279.4,273 276.8,273.3 274.2,273.5 271.6,273.6 268.9,273.6 266.3,273.4 263.6,273.2 261.1,272.9 258.5,272.5 256.1,272 253.8,271.4 251.7,270.7 249.6,269.9 247.8,269.1 246.1,268.2 244.6,267.2 243.3,266.2 242.2,265.2 241.3,264.1 240.7,263 240.2,261.9 240,260.8 240,259.6 240.3,258.5 240.7,257.4 241.4,256.4 242.3,255.4 243.3,254.4 244.6,253.4 246,252.6 247.6,251.7 249.4,251 251.3,250.3 253.3,249.7 255.5,249.2 257.7,248.7 260,248.4 262.4,248.1 264.8,247.9 267.3,247.9 269.8,247.9 272.3,247.9 274.7,248.1 277.2,248.4 279.5,248.8 281.8,249.2 284,249.8 286.2,250.4 288.2,251.1 290,251.8 291.7,252.6 293.3,253.5 294.7,254.5 295.9,255.5 296.9,256.5 297.7,257.5 298.3,258.6 298.7,259.8 298.9,260.9 298.8,262 298.5,263.1 298,264.2" fill="rgb(255,33,0)"/>
<polygon points="295.4,265 294.5,265.9 293.4,266.9 292.1,267.7 290.7,268.6 289,269.3 287.2,270 285.3,270.6 283.2,271.2 281,271.6 278.8,272 276.4,272.3 274,272.5 271.6,272.6 269.1,272.6 266.6,272.5 264.2,272.3 261.8,272 259.5,271.6 257.2,271.1 255.1,270.6 253.1,269.9 251.2,269.2 249.5,268.4 247.9,267.6 246.5,266.7 245.3,265.8 244.3,264.8 243.5,263.8 242.8,262.8 242.4,261.8 242.2,260.7 242.2,259.7 242.5,258.7 242.9,257.7 243.5,256.7 244.3,255.7 245.3,254.8 246.4,253.9 247.8,253.1 249.3,252.4 250.9,251.7 252.7,251 254.5,250.5 256.5,250 258.6,249.6 260.8,249.2 263,249 265.3,248.8 267.5,248.7 269.9,248.8 272.2,248.8 274.5,249 276.7,249.3 278.9,249.6 281.1,250 283.1,250.5 285.1,251.1 286.9,251.7 288.7,252.4 290.3,253.2 291.7,254 293,254.9 294.1,255.8 295.1,256.8 295.8,257.8 296.4,258.8 296.7,259.8 296.9,260.9 296.8,261.9 296.5,262.9 296.1,264" fill="rgb(255,29,0)"/>
<polygon points="293.5,264.6 292.7,265.5 291.6,266.4 290.5,267.2 289.1,267.9 287.6,268.6 286,269.3 284.2,269.8 282.3,270.3 280.3,270.8 278.2,271.1 276,271.4 273.8,271.5 271.5,271.6 269.3,271.6 267,271.5 264.8,271.3 262.6,271 260.4,270.7 258.4,270.3 256.4,269.7 254.5,269.2 252.8,268.5 251.2,267.8 249.7,267 248.4,266.2 247.3,265.4 246.4,264.5 245.6,263.6 245,262.6 244.6,261.7 244.5,260.7 244.5,259.8 244.6,258.8 245,257.9 245.6,257 246.3,256.1 247.2,255.2 248.3,254.4 249.5,253.7 250.9,253 252.4,252.3 254,251.8 255.8,251.2 257.6,250.8 259.5,250.4 261.5,250.1 263.6,249.9 265.7,249.7 267.8,249.6 269.9,249.7 272.1,249.7 274.2,249.9 276.3,250.1 278.3,250.5 280.3,250.8 282.2,251.3 284,251.8 285.7,252.4 287.3,253.1 288.8,253.8 290.1,254.5 291.3,255.4 292.4,256.2 293.2,257.1 293.9,258 294.4,258.9 294.7,259.9 294.9,260.8 294.8,261.8 294.6,262.8 294.1,263.7" fill="rgb(255,25,0)"/>
<polygon points="291.6,264.3 290.8,265.1 289.9,265.9 288.8,266.6 287.6,267.3 286.2,267.9 284.7,268.5 283.1,269 281.3,269.5 279.5,269.9 277.6,270.2 275.6,270.4 273.6,270.6 271.5,270.6 269.4,270.6 267.4,270.5 265.3,270.4 263.3,270.1 261.3,269.8 259.5,269.4 257.7,268.9 255.9,268.4 254.4,267.8 252.9,267.2 251.6,266.5 250.4,265.7 249.3,264.9 248.5,264.1 247.8,263.3 247.2,262.4 246.9,261.6 246.7,260.7 246.7,259.8 246.8,258.9 247.2,258.1 247.7,257.3 248.4,256.5 249.2,255.7 250.2,254.9 251.3,254.3 252.5,253.6 253.9,253 255.4,252.5 257,252 258.7,251.6 260.5,251.2 262.3,251 264.2,250.8 266.1,250.6 268,250.5 270,250.6 272,250.6 273.9,250.8 275.8,251 277.7,251.3 279.5,251.6 281.3,252.1 282.9,252.6 284.5,253.1 286,253.7 287.3,254.4 288.6,255.1 289.6,255.8 290.6,256.6 291.4,257.4 292,258.2 292.5,259.1 292.8,260 292.9,260.8 292.8,261.7 292.6,262.6 292.2,263.4" fill="rgb(255,21,0)"/>
<polygon points="289.7,263.9 289,264.7 288.2,265.4 287.2,266 286.1,266.7 284.8,267.2 283.4,267.8 281.9,268.2 280.4,268.6 278.7,269 277,269.3 275.2,269.5 273.3,269.6 271.5,269.7 269.6,269.7 267.7,269.6 265.9,269.4 264,269.2 262.3,268.9 260.5,268.6 258.9,268.1 257.4,267.7 255.9,267.1 254.6,266.5 253.4,265.9 252.3,265.2 251.3,264.5 250.5,263.8 249.9,263 249.4,262.3 249.1,261.5 248.9,260.7 248.9,259.9 249,259.1 249.3,258.3 249.8,257.6 250.4,256.8 251.1,256.1 252,255.5 253,254.8 254.2,254.2 255.4,253.7 256.8,253.2 258.2,252.8 259.8,252.4 261.4,252.1 263,251.8 264.8,251.6 266.5,251.5 268.3,251.5 270.1,251.5 271.9,251.5 273.6,251.7 275.4,251.9 277.1,252.1 278.7,252.5 280.3,252.8 281.9,253.3 283.3,253.8 284.6,254.3 285.9,254.9 287,255.6 288,256.2 288.8,256.9 289.5,257.7 290.1,258.4 290.5,259.2 290.8,260 290.9,260.8 290.8,261.6 290.6,262.4 290.2,263.2" fill="rgb(255,17,0)"/>
<polygon points="287.8,263.6 287.2,264.2 286.4,264.9 285.5,265.5 284.5,266 283.4,266.6 282.2,267 280.8,267.4 279.4,267.8 277.9,268.1 276.4,268.4 274.8,268.6 273.1,268.7 271.4,268.7 269.8,268.7 268.1,268.7 266.4,268.5 264.8,268.3 263.2,268.1 261.6,267.7 260.2,267.4 258.8,266.9 257.5,266.4 256.3,265.9 255.2,265.4 254.2,264.7 253.3,264.1 252.6,263.5 252,262.8 251.6,262.1 251.3,261.4 251.1,260.6 251.1,259.9 251.2,259.2 251.5,258.5 251.9,257.8 252.4,257.2 253.1,256.6 253.9,256 254.8,255.4 255.8,254.9 257,254.4 258.2,253.9 259.5,253.5 260.9,253.2 262.3,252.9 263.8,252.7 265.4,252.5 266.9,252.4 268.5,252.4 270.2,252.4 271.8,252.4 273.4,252.5 274.9,252.7 276.5,253 278,253.3 279.4,253.6 280.8,254 282.1,254.5 283.3,255 284.4,255.5 285.4,256.1 286.3,256.7 287,257.3 287.7,258 288.2,258.7 288.6,259.4 288.8,260.1 288.9,260.8 288.8,261.5 288.6,262.2 288.3,262.9" fill="rgb(255,14,0)"/>
<polygon points="285.9,263.2 285.4,263.8 284.7,264.4 283.9,264.9 283,265.4 282,265.9 280.9,266.3 279.7,266.7 278.5,267 277.2,267.2 275.8,267.5 274.3,267.6 272.9,267.7 271.4,267.8 269.9,267.8 268.4,267.7 266.9,267.6 265.5,267.4 264.1,267.2 262.7,266.9 261.4,266.6 260.2,266.2 259,265.8 257.9,265.3 257,264.8 256.1,264.3 255.3,263.7 254.7,263.1 254.2,262.5 253.8,261.9 253.5,261.3 253.3,260.6 253.3,260 253.4,259.4 253.6,258.8 254,258.1 254.5,257.6 255.1,257 255.8,256.5 256.6,256 257.5,255.5 258.5,255.1 259.6,254.7 260.7,254.3 262,254 263.3,253.8 264.6,253.6 266,253.4 267.4,253.3 268.8,253.3 270.2,253.3 271.7,253.3 273.1,253.4 274.5,253.6 275.9,253.8 277.2,254.1 278.5,254.4 279.7,254.7 280.8,255.1 281.9,255.6 282.9,256.1 283.8,256.6 284.6,257.1 285.3,257.7 285.8,258.3 286.3,258.9 286.6,259.5 286.8,260.1 286.9,260.8 286.9,261.4 286.7,262 286.4,262.6" fill="rgb(255,13,0)"/>
<polygon points="284.1,262.9 283.6,263.4 283,263.9 282.3,264.4 281.5,264.8 280.6,265.2 279.7,265.6 278.6,265.9 277.5,266.2 276.4,266.4 275.2,266.6 273.9,266.7 272.7,266.8 271.4,266.9 270.1,266.9 268.8,266.8 267.5,266.7 266.2,266.5 265,266.3 263.8,266.1 262.6,265.8 261.5,265.5 260.5,265.1 259.6,264.7 258.7,264.3 258,263.8 257.3,263.3 256.7,262.8 256.3,262.3 255.9,261.7 255.7,261.2 255.5,260.6 255.5,260.1 255.6,259.5 255.8,259 256.1,258.4 256.5,257.9 257,257.4 257.7,257 258.4,256.5 259.2,256.1 260,255.7 261,255.4 262,255.1 263.1,254.8 264.2,254.6 265.4,254.4 266.6,254.3 267.8,254.2 269.1,254.2 270.3,254.2 271.6,254.2 272.8,254.3 274.1,254.5 275.3,254.7 276.4,254.9 277.6,255.2 278.6,255.5 279.6,255.8 280.6,256.2 281.4,256.6 282.2,257.1 282.9,257.5 283.5,258 284,258.6 284.4,259.1 284.7,259.6 284.8,260.2 284.9,260.7 284.9,261.3 284.7,261.8 284.4,262.4" fill="rgb(255,11,0)"/>
<polygon points="282.2,262.6 281.8,263 281.3,263.4 280.7,263.8 280,264.2 279.2,264.5 278.4,264.8 277.5,265.1 276.6,265.3 275.6,265.5 274.6,265.7 273.5,265.8 272.4,265.9 271.3,265.9 270.2,265.9 269.1,265.9 268,265.8 266.9,265.7 265.8,265.5 264.8,265.3 263.8,265 262.9,264.7 262.1,264.4 261.2,264.1 260.5,263.7 259.9,263.3 259.3,262.9 258.8,262.5 258.4,262 258.1,261.5 257.9,261.1 257.8,260.6 257.7,260.1 257.8,259.7 258,259.2 258.2,258.7 258.6,258.3 259,257.9 259.5,257.5 260.2,257.1 260.8,256.7 261.6,256.4 262.4,256.1 263.3,255.9 264.2,255.6 265.2,255.5 266.2,255.3 267.2,255.2 268.3,255.1 269.3,255.1 270.4,255.1 271.5,255.1 272.6,255.2 273.6,255.3 274.7,255.5 275.7,255.7 276.6,255.9 277.5,256.2 278.4,256.5 279.2,256.8 279.9,257.2 280.6,257.6 281.2,258 281.7,258.4 282.1,258.9 282.5,259.3 282.7,259.8 282.9,260.2 282.9,260.7 282.9,261.2 282.7,261.7 282.5,262.1" fill="rgb(255,9,0)"/>
<polygon points="280.3,262.2 280,262.6 279.5,262.9 279,263.3 278.5,263.6 277.9,263.8 277.2,264.1 276.4,264.3 275.7,264.5 274.8,264.7 274,264.8 273.1,264.9 272.2,265 271.3,265 270.4,265 269.4,265 268.5,264.9 267.6,264.8 266.7,264.6 265.9,264.5 265.1,264.3 264.3,264 263.6,263.8 262.9,263.5 262.3,263.2 261.7,262.8 261.3,262.5 260.8,262.1 260.5,261.8 260.3,261.4 260.1,261 260,260.6 259.9,260.2 260,259.8 260.1,259.4 260.4,259 260.6,258.7 261,258.3 261.4,258 261.9,257.7 262.5,257.4 263.1,257.1 263.8,256.9 264.5,256.6 265.3,256.5 266.1,256.3 267,256.2 267.8,256.1 268.7,256 269.6,256 270.5,256 271.4,256 272.3,256.1 273.2,256.2 274,256.3 274.9,256.5 275.7,256.7 276.5,256.9 277.2,257.2 277.8,257.5 278.5,257.8 279,258.1 279.5,258.4 279.9,258.8 280.3,259.1 280.6,259.5 280.8,259.9 280.9,260.3 280.9,260.7 280.9,261.1 280.8,261.5 280.6,261.9" fill="rgb(255,8,0)"/>
<polygon points="278.4,261.9 278.2,262.2 277.8,262.5 277.4,262.7 277,263 276.5,263.2 275.9,263.4 275.4,263.6 274.7,263.7 274.1,263.8 273.4,264 272.7,264 272,264.1 271.2,264.1 270.5,264.1 269.8,264.1 269,264 268.3,263.9 267.6,263.8 266.9,263.7 266.3,263.5 265.7,263.3 265.1,263.1 264.5,262.9 264,262.6 263.6,262.4 263.2,262.1 262.9,261.8 262.6,261.5 262.4,261.2 262.3,260.9 262.2,260.6 262.2,260.3 262.2,260 262.3,259.6 262.5,259.3 262.7,259.1 263,258.8 263.3,258.5 263.7,258.2 264.2,258 264.7,257.8 265.2,257.6 265.8,257.4 266.4,257.3 267.1,257.1 267.8,257 268.4,257 269.2,256.9 269.9,256.9 270.6,256.9 271.3,256.9 272,257 272.8,257.1 273.4,257.2 274.1,257.3 274.8,257.5 275.4,257.7 275.9,257.9 276.5,258.1 277,258.3 277.4,258.6 277.8,258.8 278.2,259.1 278.4,259.4 278.7,259.7 278.8,260 278.9,260.4 278.9,260.7 278.9,261 278.8,261.3 278.7,261.6" fill="rgb(255,6,0)"/>
<polygon points="276.6,261.6 276.4,261.8 276.1,262 275.8,262.2 275.5,262.3 275.1,262.5 274.7,262.7 274.3,262.8 273.8,262.9 273.3,263 272.8,263.1 272.3,263.2 271.7,263.2 271.2,263.2 270.6,263.2 270.1,263.2 269.5,263.1 269,263.1 268.5,263 268,262.9 267.5,262.8 267,262.6 266.6,262.5 266.2,262.3 265.8,262.1 265.5,261.9 265.2,261.7 264.9,261.5 264.7,261.3 264.6,261 264.5,260.8 264.4,260.6 264.4,260.3 264.4,260.1 264.5,259.9 264.6,259.6 264.8,259.4 265,259.2 265.3,259 265.6,258.8 265.9,258.6 266.3,258.5 266.7,258.3 267.1,258.2 267.6,258.1 268.1,258 268.6,257.9 269.1,257.9 269.6,257.8 270.2,257.8 270.7,257.8 271.2,257.8 271.8,257.9 272.3,257.9 272.8,258 273.3,258.1 273.8,258.2 274.3,258.4 274.7,258.5 275.1,258.7 275.5,258.9 275.8,259.1 276.1,259.3 276.4,259.5 276.6,259.7 276.7,259.9 276.9,260.2 276.9,260.4 277,260.6 276.9,260.9 276.9,261.1 276.8,261.3" fill="rgb(255,4,0)"/>
<polygon points="274.7,261.2 274.6,261.4 274.4,261.5 274.2,261.6 274,261.7 273.7,261.9 273.5,262 273.2,262 272.9,262.1 272.5,262.2 272.2,262.2 271.9,262.3 271.5,262.3 271.1,262.3 270.8,262.3 270.4,262.3 270,262.3 269.7,262.2 269.3,262.2 269,262.1 268.7,262 268.4,261.9 268.1,261.8 267.8,261.7 267.5,261.6 267.3,261.5 267.1,261.3 267,261.2 266.8,261 266.7,260.9 266.6,260.7 266.6,260.6 266.6,260.4 266.6,260.3 266.7,260.1 266.7,259.9 266.9,259.8 267,259.7 267.2,259.5 267.4,259.4 267.6,259.3 267.8,259.2 268.1,259.1 268.4,259 268.7,258.9 269,258.8 269.4,258.8 269.7,258.8 270.1,258.7 270.4,258.7 270.8,258.7 271.2,258.7 271.5,258.8 271.9,258.8 272.2,258.9 272.6,258.9 272.9,259 273.2,259.1 273.5,259.2 273.8,259.3 274,259.4 274.2,259.6 274.4,259.7 274.6,259.8 274.7,260 274.8,260.1 274.9,260.3 275,260.5 275,260.6 275,260.8 274.9,260.9 274.8,261.1" fill="rgb(255,3,0)"/>
<polygon points="272.9,260.9 272.8,261 272.7,261 272.6,261.1 272.5,261.1 272.4,261.2 272.2,261.3 272.1,261.3 271.9,261.3 271.8,261.4 271.6,261.4 271.4,261.4 271.3,261.4 271.1,261.4 270.9,261.4 270.7,261.4 270.5,261.4 270.3,261.4 270.2,261.4 270,261.3 269.8,261.3 269.7,261.2 269.5,261.2 269.4,261.1 269.3,261.1 269.2,261 269.1,260.9 269,260.9 268.9,260.8 268.9,260.7 268.8,260.6 268.8,260.6 268.8,260.5 268.8,260.4 268.8,260.3 268.9,260.2 268.9,260.2 269,260.1 269.1,260 269.2,260 269.3,259.9 269.4,259.9 269.6,259.8 269.7,259.8 269.9,259.7 270,259.7 270.2,259.7 270.4,259.7 270.5,259.6 270.7,259.6 270.9,259.6 271.1,259.6 271.3,259.7 271.5,259.7 271.6,259.7 271.8,259.7 272,259.8 272.1,259.8 272.3,259.9 272.4,259.9 272.5,260 272.6,260.1 272.7,260.1 272.8,260.2 272.9,260.3 272.9,260.3 273,260.4 273,260.5 273,260.6 273,260.7 273,260.7 272.9,260.8" fill="rgb(255,1,0)"/>
</g>
<path d="M207.2 193.2L196.8 201.3M196.8 201.3L185.9 209.8M185.9 209.8L174.3 218.9M174.3 218.9L162.1 228.4M162.1 228.4L149.1 238.5M149.1 238.5L135.4 249.2M135.4 249.2L120.8 260.6M120.8 260.6L105.2 272.8M105.2 272.8L88.6 285.7M88.6 285.7L70.8 299.6M226.8 196.1L216.8 204.4M216.8 204.4L206.3 213.1M206.3 213.1L195.1 222.3M195.1 222.3L183.4 232.1M183.4 232.1L170.9 242.4M170.9 242.4L163.9 248.3M157.6 253.4L150.4 259.4M143.5 265.1L135 272.2M128.5 277.6L120.5 284.2M112.5 290.9L102.9 298.8M246.7 199.1L237.2 207.6M237.2 207.6L227.1 216.5M227.1 216.5L216.5 225.9M216.5 225.9L205.2 235.9M205.2 235.9L193.2 246.5M193.2 246.5L186.4 252.5M180.5 257.7L173.7 263.7M166.9 269.7L159 276.8M152.5 282.5L144.8 289.3M137 296.2L128 304.1M267.2 202.2L258.1 210.8M258.1 210.8L248.5 219.9M248.5 219.9L238.3 229.6M238.3 229.6L227.5 239.8M227.5 239.8L216.1 250.6M216.1 250.6L210 256.4M203.9 262.2L197.4 268.3M191 274.4L183.5 281.6M177.1 287.6L168.4 295.9M162.3 301.6L154.3 309.2M288 205.3L279.4 214.1M279.4 214.1L270.3 223.4M270.3 223.4L260.7 233.3M260.7 233.3L250.4 243.8M250.4 243.8L239.6 254.9M239.6 254.9L233.6 261M228 266.7L221 273.8M215.7 279.3L207.7 287.5M202.5 292.8L194.6 300.9M188.4 307.2L180.2 315.6M309.4 208.5L301.3 217.5M301.3 217.5L292.7 227.1M292.7 227.1L283.6 237.1M283.6 237.1L273.9 247.8M273.9 247.8L263.7 259.2M263.7 259.2L257 266.6M252.7 271.3L246.9 277.8M241.1 284.3L233.6 292.5M228.6 298.1L221.5 305.9M215.2 313L207.9 321.1M331.2 211.8L323.6 221M323.6 221L315.6 230.7M315.6 230.7L307.1 241.1M307.1 241.1L298 252M298 252L288.4 263.7M288.4 263.7L283.2 270M278.1 276.1L272.3 283.2M267.2 289.4L260.2 297.8M255.4 303.6L248.9 311.5M242.8 318.9L235.2 328.1M353.6 215.2L346.5 224.6M346.5 224.6L339.1 234.5M339.1 234.5L331.2 245.1M331.2 245.1L322.7 256.3M322.7 256.3L313.8 268.3M313.8 268.3L308.4 275.5M304.2 281L298.7 288.4M294 294.7L287.9 302.8M283.1 309.3L277.2 317.2M271.3 325L265 333.5M376.4 218.6L370 228.2M370 228.2L363.1 238.4M363.1 238.4L355.9 249.2M355.9 249.2L348.1 260.7M348.1 260.7L339.9 273M339.9 273L335.3 279.8M331.1 286.1L321.6 300.1M321.6 300.1L311.5 315.2M311.5 315.2L300.6 331.4M300.6 331.4L288.9 348.8M399.8 222.1L394 231.9M394 231.9L387.8 242.4M387.8 242.4L381.2 253.5M381.2 253.5L374.2 265.3M374.2 265.3L366.7 277.8M366.7 277.8L362.1 285.6M358.7 291.3L350.1 305.7M350.1 305.7L340.9 321.2M340.9 321.2L330.9 337.9M330.9 337.9L320.2 355.9M423.8 225.7L418.6 235.8M418.6 235.8L413.1 246.4M413.1 246.4L407.2 257.8M407.2 257.8L400.9 269.9M400.9 269.9L394.2 282.8M394.2 282.8L387.1 296.7M387.1 296.7L379.4 311.5M379.4 311.5L371.1 327.4M371.1 327.4L362.2 344.6M362.2 344.6L352.6 363.2M207.2 193.2L226.8 196.1M226.8 196.1L246.7 199.1M246.7 199.1L267.2 202.2M267.2 202.2L288 205.3M288 205.3L309.4 208.5M309.4 208.5L331.2 211.8M331.2 211.8L353.6 215.2M353.6 215.2L376.4 218.6M376.4 218.6L399.8 222.1M399.8 222.1L423.8 225.7M201.8 202.1L209.7 203.3M221.8 205.2L230 206.5M242.4 208.4L250.7 209.7M263.4 211.6L271.9 213M284.8 215L293.6 216.3M306.8 218.4L315.8 219.8M329.3 221.9L338.5 223.3M352.3 225.5L361.7 226.9M375.9 229.1L385.5 230.6M400.1 232.9L409.9 234.4M190.9 210.7L199.1 212M211.4 214L219.8 215.3M232.4 217.3L240.9 218.7M253.9 220.8L262.6 222.2M275.9 224.3L284.8 225.8M298.4 228L307.5 229.4M321.4 231.7L330.8 233.2M345 235.5L354.6 237M369.2 239.4L379.1 241M394 243.4L404.1 245M176.8 219.3L190.6 221.6M197.7 222.8L211.4 225.1M219.1 226.3L234.3 228.9M241 230L255.9 232.5M263.4 233.8L278 236.2M286.4 237.6L303.7 240.5M309.9 241.5L327.3 244.4M334.1 245.6L349.6 248.2M358.9 249.7L376.4 252.7M384.3 254L402.1 257M164.6 228.8L180.7 231.6M186 232.6L201.8 235.3M207.8 236.4L222.1 238.8M230.3 240.3L248 243.3M253.2 244.2L267.4 246.7M276.8 248.3L292.8 251.1M301 252.5L319 255.7M325.8 256.8L341.2 259.5M351.2 261.3L368.8 264.3M377.3 265.8L393 268.5M149.1 238.5L163.9 241.2M166.1 241.6L186.5 245.3M188.3 245.6L208.4 249.2M211 249.7L233.1 253.7M234.4 253.9L254.3 257.5M258.3 258.3L280.6 262.3M282.9 262.7L305.3 266.8M308.1 267.3L331.1 271.4M334.1 272L357 276.1M360.7 276.8L386.4 281.4M135.4 249.2L151.8 252.3M152.7 252.5L172.3 256.2M175.4 256.8L196.4 260.7M198.7 261.2L217.4 264.7M222.7 265.7L245 269.9M247.2 270.3L269.9 274.6M272.5 275.1L297.6 279.8M298.4 280L323.3 284.6M325.1 285L347.7 289.2M352.5 290.1L376.4 294.6M120.8 260.6L136.3 263.7M138.5 264.1L156.4 267.7M161.7 268.7L182.3 272.7M185.6 273.4L205.3 277.3M210.2 278.2L230.1 282.1M235.4 283.2L255.6 287.2M261.4 288.3L286 293.1M288 293.5L309.8 297.8M315.5 298.9L338.6 303.5M343.8 304.5L368.4 309.3M105.2 272.8L122 276.2M123.3 276.5L142 280.3M147.2 281.4L168.2 285.7M171.7 286.4L193.8 291M196.9 291.6L221.4 296.7M222.8 296.9L247.7 302.1M249.4 302.4L275.3 307.7M276.9 308.1L300.2 312.8M305.2 313.9L330 319M334.3 319.9L359.6 325M88.6 285.7L105.9 289.5M107.2 289.7L130.6 294.8M131.6 295L151.6 299.3M156.7 300.4L177.5 304.9M182.6 306L204.3 310.6M209.2 311.7L231.6 316.5M236.7 317.6L261.1 322.9M264.9 323.7L290.8 329.2M294.1 330L318.8 335.3M324.2 336.4L348.1 341.6M70.8 299.6L95.3 305.1M95.3 305.1L120.5 310.8M120.5 310.8L146.4 316.7M146.4 316.7L173.2 322.7M173.2 322.7L200.8 328.9M200.8 328.9L229.2 335.4M229.2 335.4L258.6 342M258.6 342L288.9 348.8M288.9 348.8L320.2 355.9M320.2 355.9L352.6 363.2" stroke="#0a3aa0" stroke-width="1" fill="none" shape-rendering="crispEdges"/>
<path d="M256.3 49L262.6 256" stroke="#e80000" stroke-width="1.6" fill="none"/>
<path d="M256.9 63L263.2 256" stroke="#8a0000" stroke-width="1" stroke-dasharray="6 8" fill="none"/>
<polygon points="255.6,41.5 252.5,50 258.9,50" fill="#e00000"/>
<path d="M247 23h6.6M250.3 19v8" stroke="#a4a4a4" stroke-width="1" fill="none"/>
<text x="254.8" y="29" font-family="Liberation Sans, sans-serif" font-size="16.6" fill="#a4a4a4">Z</text>
<polygon points="255,367 279,367 267,374.1" fill="#a96d36"/>
<polygon points="263.5,371.9 270.5,371.9 267,374.3" fill="#5e3f22"/>
<ellipse cx="267" cy="359.5" rx="18" ry="10.6" fill="#b87a40"/>
<path d="M266.4 345L266.9 361" stroke="#e00000" stroke-width="1.4" fill="none"/>
<path d="M278 351L281 348.5" stroke="#20a020" stroke-width="1.2" fill="none"/>
<path d="M276.5 369L567 437.3" stroke="#0c0cb8" stroke-width="1.2" fill="none"/>
</svg>
</div>
<span class="t" style="left:7.6px;top:10.24px;font-size:11px;line-height:12.287px;color:#000;letter-spacing:-0.225px;">Geometry</span>
<span class="t" style="left:64.5px;top:9.04px;font-size:11px;line-height:12.287px;color:#000;letter-spacing:-0.335px;">Near Field 3D</span>
<span class="t" style="left:19.9px;top:43.05px;font-size:11px;line-height:12.287px;color:#000;letter-spacing:-0.270px;background:#fff;padding:0 2px;margin-left:-2px;">Sound Pressure dBN/m2</span>
<span class="t" style="left:187.9px;top:43.05px;font-size:11px;line-height:12.287px;color:#000;letter-spacing:-0.177px;background:#fff;padding:0 2px;margin-left:-2px;">Incidence</span>
<span class="t" style="left:187.9px;top:114.05px;font-size:11px;line-height:12.287px;color:#000;letter-spacing:-0.209px;background:#fff;padding:0 2px;margin-left:-2px;">Magnitude</span>
<span class="t" style="left:187.9px;top:185.04px;font-size:11px;line-height:12.287px;color:#000;letter-spacing:-0.173px;background:#fff;padding:0 2px;margin-left:-2px;">Filtering Range</span>
<span class="t" style="left:198.9px;top:73.05px;font-size:11px;line-height:12.287px;color:#000;letter-spacing:-0.051px;">Scatter</span>
<span class="t" style="left:218.0px;top:140.84px;font-size:11px;line-height:12.287px;color:#000;letter-spacing:-0.657px;">dBs</span>
<span class="t" style="left:279.0px;top:140.84px;font-size:11px;line-height:12.287px;color:#000;letter-spacing:0.400px;">nat</span>
<span class="t" style="left:215.9px;top:212.04px;font-size:11px;line-height:12.287px;color:#000;letter-spacing:-0.215px;">Enable Filtering</span>
<span class="t" style="left:206.9px;top:241.04px;font-size:11px;line-height:12.287px;color:#000;letter-spacing:-0.085px;">Max:</span>
<span class="t" style="left:206.9px;top:267.05px;font-size:11px;line-height:12.287px;color:#000;letter-spacing:-0.195px;">Min:</span>
<span class="t" style="left:236.5px;top:298.75px;font-size:11px;line-height:12.287px;color:#838383;letter-spacing:-0.075px;">Filter</span>
<span class="t" style="left:87.9px;top:70.05px;font-size:11px;line-height:12.287px;color:#000;letter-spacing:0.000px;">-3.522</span>
<span class="t" style="left:87.9px;top:149.04px;font-size:11px;line-height:12.287px;color:#000;letter-spacing:0.041px;">-3.6672</span>
<span class="t" style="left:87.9px;top:228.04px;font-size:11px;line-height:12.287px;color:#000;letter-spacing:0.041px;">-3.8123</span>
<span class="t" style="left:87.9px;top:307.05px;font-size:11px;line-height:12.287px;color:#000;letter-spacing:0.041px;">-3.9575</span>
<span class="t" style="left:87.9px;top:386.05px;font-size:11px;line-height:12.287px;color:#000;letter-spacing:0.041px;">-4.1027</span>
<span class="t" style="left:87.9px;top:465.05px;font-size:11px;line-height:12.287px;color:#000;letter-spacing:0.041px;">-4.2478</span>
<span class="t" style="left:87.9px;top:545.04px;font-size:11px;line-height:12.287px;color:#000;letter-spacing:0.000px;">-4.393</span>
<div class="cb" style="left:338px;top:558px"><svg width="13" height="13" viewBox="0 0 13 13"><path d="M2.5 6.5 L5.2 9.3 L10.5 3.6" fill="none" stroke="#222" stroke-width="1.1"/></svg></div>
<span class="t" style="left:355px;top:558.04px;font-size:11px;line-height:12.287px;color:#000;letter-spacing:-0.246px;">Options</span>
<div class="cb" style="left:401px;top:558px"><svg width="13" height="13" viewBox="0 0 13 13"><path d="M2.5 6.5 L5.2 9.3 L10.5 3.6" fill="none" stroke="#222" stroke-width="1.1"/></svg></div>
<span class="t" style="left:417.8px;top:558.04px;font-size:11px;line-height:12.287px;color:#000;letter-spacing:-0.496px;">Show Grid</span>
<div class="cb" style="left:474px;top:558px"><svg width="13" height="13" viewBox="0 0 13 13"><path d="M2.5 6.5 L5.2 9.3 L10.5 3.6" fill="none" stroke="#222" stroke-width="1.1"/></svg></div>
<span class="t" style="left:490.7px;top:558.04px;font-size:11px;line-height:12.287px;color:#000;letter-spacing:-0.275px;">Show Geometry</span>
<div class="cb" style="left:575px;top:558px"><svg width="13" height="13" viewBox="0 0 13 13"><path d="M2.5 6.5 L5.2 9.3 L10.5 3.6" fill="none" stroke="#222" stroke-width="1.1"/></svg></div>
<span class="t" style="left:592px;top:558.04px;font-size:11px;line-height:12.287px;color:#000;letter-spacing:-0.306px;">Show Axis</span>
<div class="cb" style="left:650px;top:558px"><svg width="13" height="13" viewBox="0 0 13 13"><path d="M2.5 6.5 L5.2 9.3 L10.5 3.6" fill="none" stroke="#222" stroke-width="1.1"/></svg></div>
<span class="t" style="left:666.6px;top:558.04px;font-size:11px;line-height:12.287px;color:#000;letter-spacing:-0.378px;">Show Sources</span>
<span class="t" style="left:817px;top:558.04px;font-size:11px;line-height:12.287px;color:#000;letter-spacing:0.058px;">Save as...</span>
<!-- bottom arrows -->
<svg class="a" style="left:0;top:589px" width="30" height="5" viewBox="0 0 30 5"><path d="M2.5 5.5 L5.5 2 L8.5 5.5 Z M14 2 L20 2 L17 5.5 Z" fill="#000"/></svg>
</body></html>
